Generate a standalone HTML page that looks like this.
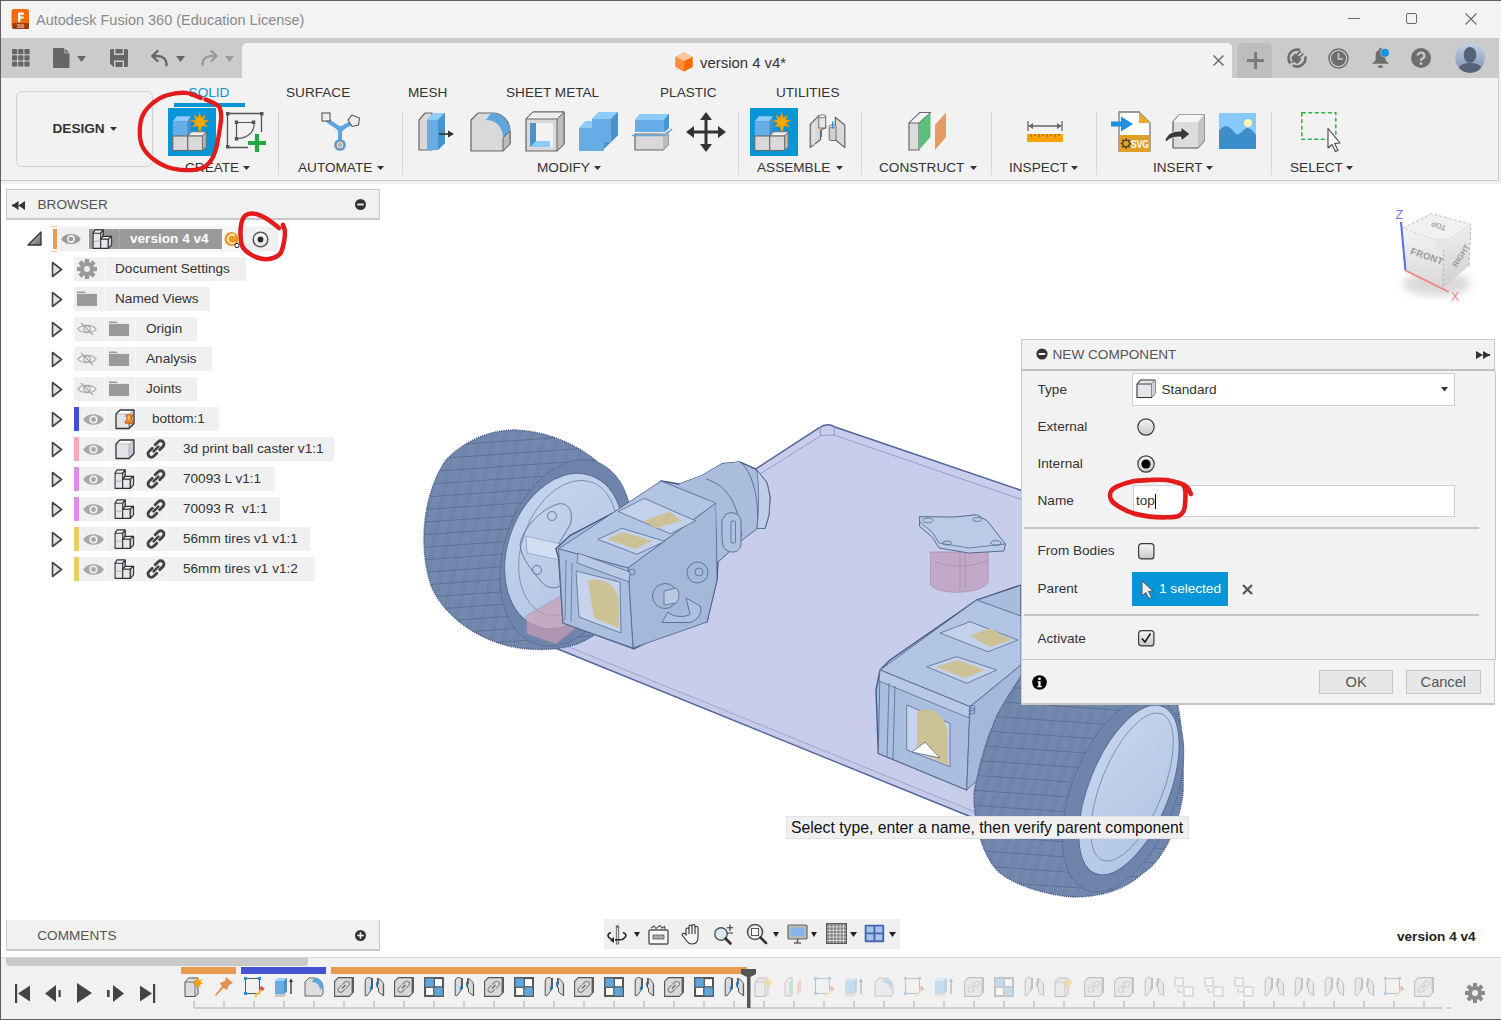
<!DOCTYPE html>
<html><head><meta charset="utf-8">
<style>
html,body{margin:0;padding:0;}
body{width:1501px;height:1020px;overflow:hidden;position:relative;background:#fff;font-family:"Liberation Sans",sans-serif;}
.a{position:absolute;}
.t{white-space:pre;}
svg{overflow:visible;}
</style></head><body>
<div class="a" style="left:0px;top:0px;width:1501px;height:38px;background:#f3f3f3;"></div>
<div class="a" style="left:0px;top:0px;width:1501px;height:1px;background:#5e5e5e;"></div>
<div class="a" style="left:0px;top:0px;width:1px;height:1020px;background:#5e5e5e;"></div>
<div class="a" style="left:0px;top:1019px;width:1501px;height:1px;background:#5e5e5e;"></div>
<svg class="a" style="left:11px;top:9px;" width="19" height="20" viewBox="0 0 19 20">
<rect x="0.5" y="0" width="17.5" height="19.5" rx="2.5" fill="#f26b0f"/>
<rect x="1.5" y="14" width="16.5" height="6" rx="1" fill="#9c3a08"/>
<path d="M7 3.5h6v2.2h-3.6v1.8h3.2v2.1h-3.2v3.4H7z" fill="#fff"/>
<text x="9.5" y="19" font-size="4.5" font-family="Liberation Sans" font-weight="bold" fill="#f4c9a8" text-anchor="middle">360</text>
</svg>
<div class="a t" style="left:36.00px;top:13.33px;font-size:14.5px;line-height:14.5px;color:#8a8a8a;">Autodesk Fusion 360 (Education License)</div>
<div class="a" style="left:1348px;top:18px;width:12px;height:1px;background:#6a6a6a;"></div>
<div class="a" style="left:1406px;top:13px;width:11px;height:11px;border:1px solid #6a6a6a;border-radius:2px;box-sizing:border-box;"></div>
<svg class="a" style="left:1465px;top:13px;" width="12" height="12" viewBox="0 0 12 12"><path d="M0.5 0.5L11.5 11.5M11.5 0.5L0.5 11.5" stroke="#6a6a6a" stroke-width="1.1"/></svg>
<div class="a" style="left:1px;top:38px;width:1498px;height:40px;background:#cbcbcb;"></div>
<div class="a" style="left:1499px;top:38px;width:2px;height:146px;background:#f2f2f2;"></div>
<svg class="a" style="left:12px;top:49px;" width="18" height="18" viewBox="0 0 18 18"><rect x="0.0" y="0.0" width="5.2" height="5.2" rx="0.8" fill="#666"/><rect x="6.2" y="0.0" width="5.2" height="5.2" rx="0.8" fill="#666"/><rect x="12.4" y="0.0" width="5.2" height="5.2" rx="0.8" fill="#666"/><rect x="0.0" y="6.2" width="5.2" height="5.2" rx="0.8" fill="#666"/><rect x="6.2" y="6.2" width="5.2" height="5.2" rx="0.8" fill="#666"/><rect x="12.4" y="6.2" width="5.2" height="5.2" rx="0.8" fill="#666"/><rect x="0.0" y="12.4" width="5.2" height="5.2" rx="0.8" fill="#666"/><rect x="6.2" y="12.4" width="5.2" height="5.2" rx="0.8" fill="#666"/><rect x="12.4" y="12.4" width="5.2" height="5.2" rx="0.8" fill="#666"/></svg>
<svg class="a" style="left:53px;top:48px;" width="17" height="20" viewBox="0 0 17 20"><path d="M1 0H10.5L16.5 6V19a1 1 0 0 1-1 1H1a1 1 0 0 1-1-1V1a1 1 0 0 1 1-1z" fill="#666"/><path d="M11.5 0.3L16.3 5.2H11.5z" fill="#cbcbcb"/><path d="M12.3 0.8L16 4.5H12.3z" fill="#666"/></svg>
<svg class="a" style="left:77px;top:56px;" width="9" height="6" viewBox="0 0 9 6"><path d="M0 0H9L4.5 6Z" fill="#666"/></svg>
<svg class="a" style="left:110px;top:49px;" width="18" height="18" viewBox="0 0 18 18"><path d="M1.5 0H16.5a1.5 1.5 0 0 1 1.5 1.5V16.5a1.5 1.5 0 0 1-1.5 1.5H3.5L0 14.5V1.5A1.5 1.5 0 0 1 1.5 0z" fill="#666"/><path d="M4.7 0V5.3H13.3V0" fill="none" stroke="#cbcbcb" stroke-width="1.4"/><path d="M4.7 18V12.2H13.3V18" fill="none" stroke="#cbcbcb" stroke-width="1.4"/></svg>
<svg class="a" style="left:151px;top:50px;" width="17" height="16" viewBox="0 0 17 16"><path d="M15.5 15C15.5 9 12 6 6.5 6H3" fill="none" stroke="#666" stroke-width="2.4" stroke-linecap="round"/><path d="M6.5 1L1.2 6l5.3 5" fill="none" stroke="#666" stroke-width="2.4" stroke-linecap="round" stroke-linejoin="round"/></svg>
<svg class="a" style="left:176px;top:56px;" width="9" height="6" viewBox="0 0 9 6"><path d="M0 0H9L4.5 6Z" fill="#666"/></svg>
<svg class="a" style="left:201px;top:50px;" width="17" height="16" viewBox="0 0 17 16"><path d="M1.5 15C1.5 9 5 6 10.5 6H14" fill="none" stroke="#9a9a9a" stroke-width="2.4" stroke-linecap="round"/><path d="M10.5 1L15.8 6l-5.3 5" fill="none" stroke="#9a9a9a" stroke-width="2.4" stroke-linecap="round" stroke-linejoin="round"/></svg>
<svg class="a" style="left:225px;top:56px;" width="9" height="6" viewBox="0 0 9 6"><path d="M0 0H9L4.5 6Z" fill="#9a9a9a"/></svg>
<div class="a" style="left:242px;top:43px;width:990px;height:36px;background:#f2f2f2;border-radius:5px 5px 0 0;"></div>
<svg class="a" style="left:675px;top:52px;" width="18" height="20" viewBox="0 0 18 20"><path d="M9 0.5L17.5 5V15L9 19.5L0.5 15V5z" fill="#ff7a1a"/><path d="M9 0.5L17.5 5L9 9.5L0.5 5z" fill="#ffc69a"/><path d="M9 9.5L17.5 5V15L9 19.5z" fill="#ff6a00"/><path d="M0.5 5L9 9.5V19.5L0.5 15z" fill="#ff8d3a"/></svg>
<div class="a t" style="left:700.00px;top:55.69px;font-size:14.9px;line-height:14.9px;color:#333;">version 4 v4*</div>
<svg class="a" style="left:1213px;top:55px;" width="11" height="11" viewBox="0 0 11 11"><path d="M0.5 0.5L10.5 10.5M10.5 0.5L0.5 10.5" stroke="#6d6d6d" stroke-width="1.5"/></svg>
<div class="a" style="left:1237px;top:43px;width:35px;height:36px;background:#bdbdbd;border-radius:5px 5px 0 0;"></div>
<svg class="a" style="left:1247px;top:52px;" width="17" height="17" viewBox="0 0 17 17"><path d="M8.5 0V17M0 8.5H17" stroke="#7a7a7a" stroke-width="3"/></svg>
<svg class="a" style="left:1287px;top:48px;" width="20" height="20" viewBox="0 0 20 20"><path d="M18.37 8.52A8.5 8.5 0 0 1 5.75 17.36M3.49 15.46A8.5 8.5 0 0 1 12.91 2.01" fill="none" stroke="#6d6d6d" stroke-width="2.6"/><g transform="rotate(45 10 10)"><rect x="5.5" y="7.5" width="9" height="7" rx="2" fill="#6d6d6d"/><rect x="6.8" y="2.5" width="1.8" height="5" fill="#6d6d6d"/><rect x="10.4" y="2.5" width="1.8" height="5" fill="#6d6d6d"/><rect x="8.6" y="13" width="1.8" height="4" fill="#6d6d6d"/></g></svg>
<svg class="a" style="left:1328px;top:48px;" width="21" height="21" viewBox="0 0 21 21"><circle cx="10.5" cy="10.5" r="9.5" fill="none" stroke="#6d6d6d" stroke-width="1.5"/><circle cx="10.5" cy="10.5" r="7.5" fill="#6d6d6d"/><path d="M10.5 5V11H15" fill="none" stroke="#cbcbcb" stroke-width="1.6"/></svg>
<svg class="a" style="left:1371px;top:47px;" width="20" height="22" viewBox="0 0 20 22"><rect x="8.3" y="0.8" width="2.4" height="3" rx="1" fill="#6d6d6d"/><path d="M9.5 2.8C5.8 2.8 4.6 6 4.6 9.5V13.3L1 16.8H18L14.4 13.3V9.5C14.4 6 13.2 2.8 9.5 2.8z" fill="#6d6d6d"/><ellipse cx="9.5" cy="19.6" rx="2.6" ry="1.4" fill="#6d6d6d"/><circle cx="14" cy="5.7" r="4.7" fill="#cbcbcb"/><circle cx="14" cy="5.7" r="4" fill="#0f95e0"/></svg>
<svg class="a" style="left:1411px;top:48px;" width="20" height="20" viewBox="0 0 20 20"><circle cx="10" cy="10" r="10" fill="#6d6d6d"/><path d="M6.8 7.6a3.3 3.1 0 1 1 4.6 2.9c-1 .5-1.4 1-1.4 2.2" fill="none" stroke="#cbcbcb" stroke-width="2.3"/><circle cx="10" cy="15.6" r="1.4" fill="#cbcbcb"/></svg>
<svg class="a" style="left:1455px;top:43px;" width="30" height="30" viewBox="0 0 30 30"><defs><linearGradient id="av" x1="0" y1="0" x2="0" y2="1"><stop offset="0" stop-color="#c5d3e6"/><stop offset="1" stop-color="#7b8fab"/></linearGradient><clipPath id="avc"><circle cx="15" cy="15" r="14.8"/></clipPath></defs><circle cx="15" cy="15" r="14.8" fill="url(#av)"/><g clip-path="url(#avc)"><ellipse cx="15" cy="12" rx="6.3" ry="8" fill="#56647a"/><path d="M2 30C3 22 8 20 15 20S27 22 28 30z" fill="#56647a"/></g></svg>
<div class="a" style="left:1px;top:78px;width:1498px;height:102px;background:#f2f2f2;"></div>
<div class="a" style="left:1px;top:180px;width:1498px;height:1.3px;background:#c6c6c6;"></div>
<div class="a" style="left:1497.8px;top:78px;width:1.2px;height:103px;background:#c9c9c9;"></div>
<div class="a" style="left:1px;top:181px;width:1500px;height:3px;background:#f0f0f0;"></div>
<div class="a" style="left:16px;top:91px;width:137px;height:76px;border:1px solid #d2d2d2;border-radius:6px;box-sizing:border-box;"></div>
<div class="a t" style="left:52.50px;top:122.49px;font-size:13.6px;line-height:13.6px;color:#333;font-weight:bold;">DESIGN</div>
<svg class="a" style="left:110px;top:127px;" width="7" height="4" viewBox="0 0 7 4"><path d="M0 0H7L3.5 4Z" fill="#333"/></svg>
<div class="a t" style="left:188.60px;top:86.29px;font-size:13.6px;line-height:13.6px;color:#0696d7;">SOLID</div>
<div class="a" style="left:174px;top:103px;width:71px;height:4px;background:#0696d7;"></div>
<div class="a t" style="left:286.00px;top:86.29px;font-size:13.6px;line-height:13.6px;color:#333;">SURFACE</div>
<div class="a t" style="left:408.00px;top:86.29px;font-size:13.6px;line-height:13.6px;color:#333;">MESH</div>
<div class="a t" style="left:506.00px;top:86.29px;font-size:13.6px;line-height:13.6px;color:#333;">SHEET METAL</div>
<div class="a t" style="left:660.00px;top:86.29px;font-size:13.6px;line-height:13.6px;color:#333;">PLASTIC</div>
<div class="a t" style="left:776.00px;top:86.29px;font-size:13.6px;line-height:13.6px;color:#333;">UTILITIES</div>
<div class="a t" style="left:185.00px;top:161.29px;font-size:13.6px;line-height:13.6px;color:#333;">CREATE</div>
<svg class="a" style="left:243px;top:166px;" width="7" height="4" viewBox="0 0 7 4"><path d="M0 0H7L3.5 4Z" fill="#333"/></svg>
<div class="a t" style="left:298.00px;top:161.29px;font-size:13.6px;line-height:13.6px;color:#333;">AUTOMATE</div>
<svg class="a" style="left:377px;top:166px;" width="7" height="4" viewBox="0 0 7 4"><path d="M0 0H7L3.5 4Z" fill="#333"/></svg>
<div class="a t" style="left:537.00px;top:161.29px;font-size:13.6px;line-height:13.6px;color:#333;">MODIFY</div>
<svg class="a" style="left:594px;top:166px;" width="7" height="4" viewBox="0 0 7 4"><path d="M0 0H7L3.5 4Z" fill="#333"/></svg>
<div class="a t" style="left:757.00px;top:161.29px;font-size:13.6px;line-height:13.6px;color:#333;">ASSEMBLE</div>
<svg class="a" style="left:836px;top:166px;" width="7" height="4" viewBox="0 0 7 4"><path d="M0 0H7L3.5 4Z" fill="#333"/></svg>
<div class="a t" style="left:879.00px;top:161.29px;font-size:13.6px;line-height:13.6px;color:#333;">CONSTRUCT</div>
<svg class="a" style="left:970px;top:166px;" width="7" height="4" viewBox="0 0 7 4"><path d="M0 0H7L3.5 4Z" fill="#333"/></svg>
<div class="a t" style="left:1009.00px;top:161.29px;font-size:13.6px;line-height:13.6px;color:#333;">INSPECT</div>
<svg class="a" style="left:1071px;top:166px;" width="7" height="4" viewBox="0 0 7 4"><path d="M0 0H7L3.5 4Z" fill="#333"/></svg>
<div class="a t" style="left:1153.00px;top:161.29px;font-size:13.6px;line-height:13.6px;color:#333;">INSERT</div>
<svg class="a" style="left:1206px;top:166px;" width="7" height="4" viewBox="0 0 7 4"><path d="M0 0H7L3.5 4Z" fill="#333"/></svg>
<div class="a t" style="left:1290.00px;top:161.29px;font-size:13.6px;line-height:13.6px;color:#333;">SELECT</div>
<svg class="a" style="left:1346px;top:166px;" width="7" height="4" viewBox="0 0 7 4"><path d="M0 0H7L3.5 4Z" fill="#333"/></svg>
<div class="a" style="left:278px;top:111px;width:1px;height:64px;background:#d6d6d6;"></div>
<div class="a" style="left:402px;top:111px;width:1px;height:64px;background:#d6d6d6;"></div>
<div class="a" style="left:738px;top:111px;width:1px;height:64px;background:#d6d6d6;"></div>
<div class="a" style="left:861px;top:111px;width:1px;height:64px;background:#d6d6d6;"></div>
<div class="a" style="left:991px;top:111px;width:1px;height:64px;background:#d6d6d6;"></div>
<div class="a" style="left:1096px;top:111px;width:1px;height:64px;background:#d6d6d6;"></div>
<div class="a" style="left:1271px;top:111px;width:1px;height:64px;background:#d6d6d6;"></div>
<svg class="a" style="left:168px;top:108px;" width="48" height="48" viewBox="0 0 48 48">
<rect width="48" height="48" fill="#0696d7"/>
<path d="M4.8 13.2L8.8 8.3H22.8L19.7 13.2z" fill="#8dcdfa"/>
<path d="M4.8 13.2H19.7V28H4.8z" fill="#67ade6"/>
<path d="M19.7 13.2L22.8 8.3V24L19.7 28z" fill="#4a8fcb"/>
<path d="M19.7 28L23.7 23.8H38.2L34.6 28z" fill="#f3f3f3" stroke="#6a6a6a" stroke-width="0.8"/>
<rect x="4.8" y="28" width="14.9" height="14.5" fill="#d9d9d9" stroke="#6a6a6a" stroke-width="1.1"/>
<rect x="19.7" y="28" width="14.9" height="14.5" fill="#d9d9d9" stroke="#6a6a6a" stroke-width="1.1"/>
<path d="M34.6 28L38.2 23.8V38.5L34.6 42.5z" fill="#b9b9b9" stroke="#6a6a6a" stroke-width="0.8"/>
<path d="M31.7 4.5L33.2 10L37.5 6.8L35.6 11.9L41 12.5L36 15L39.5 19L34.2 17.8L31.7 25L29.8 17.8L24.5 19L27.8 15L22.5 12.8L27.8 11.9L26 6.8L30.2 10z" fill="#f7a800" stroke="#e38c00" stroke-width="0.5"/>
</svg>
<svg class="a" style="left:750px;top:108px;" width="48" height="48" viewBox="0 0 48 48">
<rect width="48" height="48" fill="#0696d7"/>
<path d="M4.8 13.2L8.8 8.3H22.8L19.7 13.2z" fill="#8dcdfa"/>
<path d="M4.8 13.2H19.7V28H4.8z" fill="#67ade6"/>
<path d="M19.7 13.2L22.8 8.3V24L19.7 28z" fill="#4a8fcb"/>
<path d="M19.7 28L23.7 23.8H38.2L34.6 28z" fill="#f3f3f3" stroke="#6a6a6a" stroke-width="0.8"/>
<rect x="4.8" y="28" width="14.9" height="14.5" fill="#d9d9d9" stroke="#6a6a6a" stroke-width="1.1"/>
<rect x="19.7" y="28" width="14.9" height="14.5" fill="#d9d9d9" stroke="#6a6a6a" stroke-width="1.1"/>
<path d="M34.6 28L38.2 23.8V38.5L34.6 42.5z" fill="#b9b9b9" stroke="#6a6a6a" stroke-width="0.8"/>
<path d="M31.7 4.5L33.2 10L37.5 6.8L35.6 11.9L41 12.5L36 15L39.5 19L34.2 17.8L31.7 25L29.8 17.8L24.5 19L27.8 15L22.5 12.8L27.8 11.9L26 6.8L30.2 10z" fill="#f7a800" stroke="#e38c00" stroke-width="0.5"/>
</svg>
<svg class="a" style="left:226px;top:112px;" width="42" height="40" viewBox="0 0 42 40">
<path d="M3 1.5H35M1.5 3V34M35.5 3V20M3 35.5H22" fill="none" stroke="#555" stroke-width="1.3"/>
<rect x="0" y="0" width="3.5" height="3.5" fill="#555"/><rect x="34" y="0" width="3.5" height="3.5" fill="#555"/>
<rect x="0" y="33" width="3.5" height="3.5" fill="#555"/>
<path d="M12.5 10.5H27M10.5 12V27M28.2 12C28 20 22 26 12 26.5" fill="none" stroke="#555" stroke-width="1.2"/>
<rect x="8.8" y="8.5" width="3.5" height="3.5" fill="#555"/><rect x="25.8" y="8.5" width="3.5" height="3.5" fill="#555"/><rect x="8.8" y="25" width="3.5" height="3.5" fill="#555"/>
<path d="M31 22V40M22 31H40" stroke="#24a647" stroke-width="4.2"/>
</svg>
<svg class="a" style="left:321px;top:112px;" width="41" height="40" viewBox="0 0 41 40">
<path d="M5 7C12 14 19 14 19 20V32" fill="none" stroke="#5ea6dd" stroke-width="4"/>
<path d="M34 9C26 14 21 14 19 20" fill="none" stroke="#5ea6dd" stroke-width="4"/>
<path d="M13 14L19 20L25 14z" fill="#5ea6dd"/>
<rect x="1" y="1" width="8" height="8" fill="#eee" stroke="#555" stroke-width="1.1"/>
<path d="M31 3L38.5 6L37.5 13L31 14.5L27 8z" fill="#eee" stroke="#555" stroke-width="1.1"/>
<circle cx="19" cy="33" r="6" fill="#5ea6dd"/><circle cx="19" cy="33" r="4" fill="#d8d8d8" stroke="#777" stroke-width="0.8"/><circle cx="19" cy="33" r="1.4" fill="none" stroke="#777" stroke-width="0.7"/>
</svg>
<svg class="a" style="left:418px;top:112px;" width="38" height="40" viewBox="0 0 38 40">
<path d="M1 38V8L7 1H14V38z" fill="#d9d9d9" stroke="#666" stroke-width="1.2"/>
<path d="M9 38V8L15 1H27V31L20 38z" fill="#65ade4"/>
<path d="M9 8L15 1H27L20 8z" fill="#8dcbf8"/>
<path d="M20 8L27 1V31L20 38z" fill="#4a92cc"/>
<path d="M21 22H31" stroke="#333" stroke-width="1.6"/><path d="M30 18.5L36 22L30 25.5z" fill="#333"/>
</svg>
<svg class="a" style="left:470px;top:112px;" width="42" height="40" viewBox="0 0 42 40">
<path d="M1 39V8L8 1H22C32 1 40 9 40 19V32L33 39z" fill="#d9d9d9" stroke="#666" stroke-width="1.2"/>
<path d="M21 1C31 1 40 9 40 19L33 26C33 16 27 8 16 8z" fill="#5ea6dd"/>
<path d="M33 26V39L40 32V19z" fill="#bbbbbb" stroke="#666" stroke-width="1"/>
</svg>
<svg class="a" style="left:525px;top:111px;" width="41" height="41" viewBox="0 0 41 41">
<path d="M1 40V8L8 1H39V33L32 40z" fill="#d9d9d9" stroke="#666" stroke-width="1.2"/>
<path d="M1 8L8 1H39L32 8z" fill="#eeeeee" stroke="#666" stroke-width="1"/>
<path d="M32 8L39 1V33L32 40z" fill="#bdbdbd" stroke="#666" stroke-width="1"/>
<rect x="5" y="12" width="23" height="24" fill="#f2f2f2"/>
<path d="M5 12H11V30H25V36H5z" fill="#4a92cc"/>
<path d="M11 30H25V36H5z" fill="#8dcbf8"/>
</svg>
<svg class="a" style="left:578px;top:111px;" width="41" height="41" viewBox="0 0 41 41">
<path d="M14 8L21 1H40V24L33 31H26V40H1V17L8 10H14z" fill="#65ade4"/>
<path d="M14 8L21 1H40L33 8z" fill="#8dcbf8"/>
<path d="M1 17L8 10H14V17z" fill="#8dcbf8"/>
<path d="M33 8L40 1V24L33 31z" fill="#4a92cc"/>
<path d="M26 31H33L26 38z" fill="#4a92cc"/>
</svg>
<svg class="a" style="left:632px;top:112px;" width="41" height="40" viewBox="0 0 41 40">
<path d="M3 22H36V33L31 38H3z" fill="#d9d9d9" stroke="#666" stroke-width="1.2"/>
<path d="M31 22L36 18V33L31 38z" fill="#bdbdbd"/>
<path d="M3 8L8 2H37V16L32 20H3z" fill="#65ade4"/>
<path d="M3 8L8 2H37L32 8z" fill="#8dcbf8"/>
<path d="M32 8L37 2V16L32 20z" fill="#4a92cc"/>
<path d="M0 23.5L33 23.5L40 17" fill="none" stroke="#5ea6dd" stroke-width="1.5"/>
</svg>
<svg class="a" style="left:686px;top:112px;" width="40" height="40" viewBox="0 0 40 40">
<path d="M20 3V37M3 20H37" stroke="#333" stroke-width="3"/>
<path d="M20 0L26 8H14z M20 40L26 32H14z M0 20L8 14V26z M40 20L32 14V26z" fill="#333"/>
</svg>
<svg class="a" style="left:809px;top:114px;" width="37" height="35" viewBox="0 0 37 35">
<path d="M1.2 10.3L9.8 1.6H16.2L16.7 13.7L11.5 16.3V25.8L1.2 33.6z" fill="#d9d9d9" stroke="#666" stroke-width="1.2" stroke-linejoin="round"/>
<path d="M5 8V31" stroke="#f0f0f0" stroke-width="1"/>
<rect x="9.8" y="2" width="6.9" height="12" fill="#e8e8e8" stroke="#666" stroke-width="0.9"/>
<ellipse cx="13.25" cy="2.3" rx="3.45" ry="1.5" fill="#f4f4f4" stroke="#666" stroke-width="0.8"/>
<path d="M12.4 16.5V23" stroke="#1d8fe0" stroke-width="1.3"/>
<path d="M26.3 3.3L35.8 11V33.6L26.3 25.8z" fill="#d9d9d9" stroke="#666" stroke-width="1.2" stroke-linejoin="round"/>
<rect x="20.2" y="12" width="6.9" height="14.5" rx="1" fill="#cfcfcf" stroke="#666" stroke-width="0.9"/>
<ellipse cx="23.65" cy="12.4" rx="3.45" ry="1.5" fill="#e4e4e4" stroke="#666" stroke-width="0.8"/>
<path d="M23.7 7.5V14.5" stroke="#1d8fe0" stroke-width="1.3"/>
</svg>
<svg class="a" style="left:908px;top:112px;" width="39" height="39" viewBox="0 0 39 39">
<path d="M1 38V11L12 0.5H22.5L11 11V38z" fill="#dcdcdc" stroke="#666" stroke-width="1.2" stroke-linejoin="round"/>
<path d="M1 11L12 0.5H22.5L11 11z" fill="#f2f2f2" stroke="#666" stroke-width="1"/>
<path d="M11.5 37.5V11L22.5 0.5V25z" fill="#5bc07a"/>
<path d="M27 38V13L38 0.5V25z" fill="#e69a62"/>
</svg>
<svg class="a" style="left:1027px;top:121px;" width="36" height="21" viewBox="0 0 36 21">
<path d="M1 0V10M35 0V10M2 5H34" stroke="#666" stroke-width="1.3"/>
<path d="M1.5 5L6 2V8z M34.5 5L30 2V8z" fill="#666"/>
<rect x="0" y="13" width="36" height="8" fill="#f9a400"/>
<path d="M4 13V16M8 13V15M12 13V16M16 13V15M20 13V16M24 13V15M28 13V16M32 13V15" stroke="#8a5a00" stroke-width="1"/>
</svg>
<svg class="a" style="left:1111px;top:111px;" width="41" height="41" viewBox="0 0 41 41">
<path d="M8 1H28L39 12V40H8z" fill="#fff" stroke="#777" stroke-width="1.3"/>
<path d="M28 1L39 12H28z" fill="#eeaa2a"/>
<path d="M0 10.5H10V5.5L22 13L10 20.5V15.5H0z" fill="#1d8fe0"/>
<rect x="8" y="24" width="31" height="17" fill="#e0a028"/>
<path d="M19.60 32.50 L17.77 33.65 L18.25 35.75 L16.15 35.27 L15.00 37.10 L13.85 35.27 L11.75 35.75 L12.23 33.65 L10.40 32.50 L12.23 31.35 L11.75 29.25 L13.85 29.73 L15.00 27.90 L16.15 29.73 L18.25 29.25 L17.77 31.35z" fill="none" stroke="#333" stroke-width="1.1"/>
<text x="20" y="37.3" font-family="Liberation Sans" font-weight="bold" font-size="10" fill="#fff" textLength="18" lengthAdjust="spacingAndGlyphs">SVG</text>
</svg>
<svg class="a" style="left:1165px;top:114px;" width="40" height="35" viewBox="0 0 40 35">
<path d="M8 8L14 1H39V27L33 34H8z" fill="#dcdcdc" stroke="#555" stroke-width="1.2"/>
<path d="M8 8L14 1H39L33 8z" fill="#f5f5f5"/>
<path d="M33 8L39 1V27L33 34z" fill="#c4c4c4"/>
<path d="M0 26C3 19 8 17 16 17V13L25 20L16 27V23C9 23 5 24 1 28z" fill="#3a3a3a" stroke="#fff" stroke-width="0.8"/>
</svg>
<svg class="a" style="left:1219px;top:113px;" width="37" height="36" viewBox="0 0 37 36">
<rect width="37" height="36" fill="#87c9f9"/>
<path d="M0 18C6 10 10 13 16 20C19 24 22 19 26 16C30 13 34 18 37 22V36H0z" fill="#3b8dcc"/>
<circle cx="29" cy="10" r="4" fill="#f7f3b0"/>
</svg>
<svg class="a" style="left:1301px;top:112px;" width="42" height="40" viewBox="0 0 42 40">
<rect x="0.8" y="0.8" width="34" height="26.5" fill="none" stroke="#2fb04a" stroke-width="1.5" stroke-dasharray="4 2.5"/>
<path d="M27 16.5V36L31 32.5L34.5 39.5L37 38.3L33.6 31.5L39 31z" fill="#fff" stroke="#444" stroke-width="1.1" stroke-linejoin="round"/>
</svg>
<div class="a" style="left:6px;top:189px;width:374px;height:31px;background:#f1f1f1;border:1px solid #c9c9c9;border-bottom-width:2px;box-sizing:border-box;"></div>
<svg class="a" style="left:12px;top:201px;" width="14" height="9" viewBox="0 0 14 9"><path d="M0 4.5L6.5 0V9z M6.5 4.5L13 0V9z" fill="#333"/><rect x="0" y="3.5" width="2" height="2" fill="#333"/></svg>
<div class="a t" style="left:37.50px;top:198.49px;font-size:13.6px;line-height:13.6px;color:#555;">BROWSER</div>
<svg class="a" style="left:355px;top:199px;" width="11" height="11" viewBox="0 0 11 11"><circle cx="5.5" cy="5.5" r="5.5" fill="#333"/><rect x="2.3" y="4.6" width="6.4" height="1.8" fill="#f1f1f1"/></svg>
<div class="a" style="left:51px;top:226px;width:228px;height:26px;background:#f7f7f7;"></div>
<div class="a" style="left:51px;top:226px;width:6px;height:1px;background:#f5c9a0;"></div>
<div class="a" style="left:51px;top:251px;width:6px;height:1px;background:#f5c9a0;"></div>
<svg class="a" style="left:27px;top:231px;" width="15" height="15" viewBox="0 0 15 15"><defs><linearGradient id="tg" x1="0" y1="0" x2="1" y2="1"><stop offset="0" stop-color="#ddd"/><stop offset="1" stop-color="#666"/></linearGradient></defs><path d="M1 14L14 1V14z" fill="url(#tg)" stroke="#333" stroke-width="1.3" stroke-linejoin="round"/></svg>
<div class="a" style="left:53px;top:229px;width:4px;height:20px;background:#ec9a45;"></div>
<div class="a" style="left:58px;top:228px;width:30px;height:23px;background:#f0f0f0;"></div>
<svg class="a" style="left:61px;top:233px;" width="20" height="12" viewBox="0 0 20 12"><path d="M0.3 6C3.5 -0.8 16.5 -0.8 19.7 6C16.5 12.8 3.5 12.8 0.3 6z" fill="#9a9a9a"/><circle cx="10" cy="6" r="3.9" fill="#f0f0f0"/><circle cx="10" cy="6" r="2.3" fill="#9a9a9a"/></svg>
<div class="a" style="left:88.5px;top:229px;width:133px;height:20px;background:#9a9a9a;"></div>
<div class="a" style="left:119px;top:229px;width:1px;height:20px;background:#a8a8a8;"></div>
<svg class="a" style="left:92px;top:229px;" width="20" height="20" viewBox="0 0 20 20"><g stroke="#333" stroke-width="1.1" stroke-linejoin="round"><path d="M1.1 4.2L3.1 1H11.1V7.4L8.7 10.2V19.4H1.1z" fill="#e6e7ec"/><path d="M1.1 4.2L3.1 1H11.1L8.7 4.2z" fill="#f4f4f7"/><path d="M8.7 4.2L11.1 1V7.4L8.7 10.2z" fill="#d2d3d9"/><path d="M8.7 10.2L11.1 7.4H19.6L16.3 10.2z" fill="#f4f4f7"/><path d="M8.7 10.2H16.3V19.4H8.7z" fill="#e6e7ec"/><path d="M16.3 10.2L19.6 7.4V15.8L16.3 19.4z" fill="#d2d3d9"/></g><path d="M1.1 12.2H8.7" stroke="#999" stroke-width="0.7"/></svg>
<div class="a t" style="left:130.00px;top:232.49px;font-size:13.6px;line-height:13.6px;color:#fff;font-weight:bold;">version 4 v4</div>
<svg class="a" style="left:224px;top:230px;" width="16" height="19" viewBox="0 0 16 19"><circle cx="7.5" cy="9" r="7" fill="#ec9a22"/><path d="M10.8 5.6A4.3 4.3 0 1 0 10.8 12.4" fill="none" stroke="#fff" stroke-width="1.3"/><circle cx="13" cy="15.5" r="2.2" fill="#fff" stroke="#222" stroke-width="1"/></svg>
<div class="a" style="left:243px;top:227px;width:35px;height:24px;background:#f0f0f0;"></div>
<svg class="a" style="left:252px;top:231px;" width="17" height="17" viewBox="0 0 17 17"><defs><linearGradient id="rdg" x1="0" y1="0" x2="0" y2="1"><stop offset="0" stop-color="#fcfcfc"/><stop offset="1" stop-color="#e2e2e2"/></linearGradient></defs><circle cx="8.5" cy="8.5" r="7.3" fill="url(#rdg)" stroke="#555" stroke-width="1.5"/><circle cx="8.5" cy="8.5" r="2.9" fill="#2a2a2a"/></svg>
<svg class="a" style="left:51px;top:260.5px;" width="12" height="17" viewBox="0 0 12 17"><path d="M1.5 1.5L10.5 8.5L1.5 15.5z" fill="#e2e2e2" stroke="#444" stroke-width="1.6" stroke-linejoin="round"/></svg>
<div class="a" style="left:73.5px;top:257px;width:172.1px;height:24px;background:#f0f0f0;"></div>
<svg class="a" style="left:77px;top:259px;" width="20" height="20" viewBox="0 0 20 20"><g transform="translate(10 10)"><rect x="-2.2" y="-10" width="4.4" height="5" fill="#9a9a9a" transform="rotate(0)"/><rect x="-2.2" y="-10" width="4.4" height="5" fill="#9a9a9a" transform="rotate(45)"/><rect x="-2.2" y="-10" width="4.4" height="5" fill="#9a9a9a" transform="rotate(90)"/><rect x="-2.2" y="-10" width="4.4" height="5" fill="#9a9a9a" transform="rotate(135)"/><rect x="-2.2" y="-10" width="4.4" height="5" fill="#9a9a9a" transform="rotate(180)"/><rect x="-2.2" y="-10" width="4.4" height="5" fill="#9a9a9a" transform="rotate(225)"/><rect x="-2.2" y="-10" width="4.4" height="5" fill="#9a9a9a" transform="rotate(270)"/><rect x="-2.2" y="-10" width="4.4" height="5" fill="#9a9a9a" transform="rotate(315)"/><circle r="7" fill="#9a9a9a"/><circle r="3" fill="#f0f0f0"/></g></svg>
<div class="a" style="left:104px;top:257px;width:1px;height:24px;background:#f7f7f7;"></div>
<div class="a t" style="left:115.00px;top:261.99px;font-size:13.6px;line-height:13.6px;color:#333;">Document Settings</div>
<svg class="a" style="left:51px;top:290.5px;" width="12" height="17" viewBox="0 0 12 17"><path d="M1.5 1.5L10.5 8.5L1.5 15.5z" fill="#e2e2e2" stroke="#444" stroke-width="1.6" stroke-linejoin="round"/></svg>
<div class="a" style="left:73.5px;top:287px;width:136.9px;height:24px;background:#f0f0f0;"></div>
<svg class="a" style="left:77px;top:290px;" width="20" height="17" viewBox="0 0 20 17"><path d="M0 1.5h7.5l1.5 2H20V16H0z" fill="#9a9a9a"/><rect x="0" y="4.5" width="20" height="11.5" fill="#9a9a9a"/><path d="M0 3.5h20" stroke="#f0f0f0" stroke-width="0.8"/></svg>
<div class="a" style="left:104px;top:287px;width:1px;height:24px;background:#f7f7f7;"></div>
<div class="a t" style="left:115.00px;top:291.99px;font-size:13.6px;line-height:13.6px;color:#333;">Named Views</div>
<svg class="a" style="left:51px;top:320.5px;" width="12" height="17" viewBox="0 0 12 17"><path d="M1.5 1.5L10.5 8.5L1.5 15.5z" fill="#e2e2e2" stroke="#444" stroke-width="1.6" stroke-linejoin="round"/></svg>
<div class="a" style="left:73.5px;top:317px;width:123.5px;height:24px;background:#f0f0f0;"></div>
<svg class="a" style="left:77px;top:323px;" width="20" height="12" viewBox="0 0 20 12"><path d="M0.8 6C4.5 1.2 15.5 1.2 19.2 6C15.5 10.8 4.5 10.8 0.8 6z" fill="none" stroke="#a8a8a8" stroke-width="1.2"/><circle cx="10" cy="6" r="3.2" fill="none" stroke="#a8a8a8" stroke-width="1.2"/><path d="M4 0L16 12" stroke="#a8a8a8" stroke-width="1.2"/></svg>
<div class="a" style="left:104px;top:317px;width:1px;height:24px;background:#f7f7f7;"></div>
<svg class="a" style="left:108.5px;top:320px;" width="20" height="17" viewBox="0 0 20 17"><path d="M0 1.5h7.5l1.5 2H20V16H0z" fill="#9a9a9a"/><rect x="0" y="4.5" width="20" height="11.5" fill="#9a9a9a"/><path d="M0 3.5h20" stroke="#f0f0f0" stroke-width="0.8"/></svg>
<div class="a" style="left:135px;top:317px;width:1px;height:24px;background:#f7f7f7;"></div>
<div class="a t" style="left:146.00px;top:321.99px;font-size:13.6px;line-height:13.6px;color:#333;">Origin</div>
<svg class="a" style="left:51px;top:350.5px;" width="12" height="17" viewBox="0 0 12 17"><path d="M1.5 1.5L10.5 8.5L1.5 15.5z" fill="#e2e2e2" stroke="#444" stroke-width="1.6" stroke-linejoin="round"/></svg>
<div class="a" style="left:73.5px;top:347px;width:138.5px;height:24px;background:#f0f0f0;"></div>
<svg class="a" style="left:77px;top:353px;" width="20" height="12" viewBox="0 0 20 12"><path d="M0.8 6C4.5 1.2 15.5 1.2 19.2 6C15.5 10.8 4.5 10.8 0.8 6z" fill="none" stroke="#a8a8a8" stroke-width="1.2"/><circle cx="10" cy="6" r="3.2" fill="none" stroke="#a8a8a8" stroke-width="1.2"/><path d="M4 0L16 12" stroke="#a8a8a8" stroke-width="1.2"/></svg>
<div class="a" style="left:104px;top:347px;width:1px;height:24px;background:#f7f7f7;"></div>
<svg class="a" style="left:108.5px;top:350px;" width="20" height="17" viewBox="0 0 20 17"><path d="M0 1.5h7.5l1.5 2H20V16H0z" fill="#9a9a9a"/><rect x="0" y="4.5" width="20" height="11.5" fill="#9a9a9a"/><path d="M0 3.5h20" stroke="#f0f0f0" stroke-width="0.8"/></svg>
<div class="a" style="left:135px;top:347px;width:1px;height:24px;background:#f7f7f7;"></div>
<div class="a t" style="left:146.00px;top:351.99px;font-size:13.6px;line-height:13.6px;color:#333;">Analysis</div>
<svg class="a" style="left:51px;top:380.5px;" width="12" height="17" viewBox="0 0 12 17"><path d="M1.5 1.5L10.5 8.5L1.5 15.5z" fill="#e2e2e2" stroke="#444" stroke-width="1.6" stroke-linejoin="round"/></svg>
<div class="a" style="left:73.5px;top:377px;width:123.5px;height:24px;background:#f0f0f0;"></div>
<svg class="a" style="left:77px;top:383px;" width="20" height="12" viewBox="0 0 20 12"><path d="M0.8 6C4.5 1.2 15.5 1.2 19.2 6C15.5 10.8 4.5 10.8 0.8 6z" fill="none" stroke="#a8a8a8" stroke-width="1.2"/><circle cx="10" cy="6" r="3.2" fill="none" stroke="#a8a8a8" stroke-width="1.2"/><path d="M4 0L16 12" stroke="#a8a8a8" stroke-width="1.2"/></svg>
<div class="a" style="left:104px;top:377px;width:1px;height:24px;background:#f7f7f7;"></div>
<svg class="a" style="left:108.5px;top:380px;" width="20" height="17" viewBox="0 0 20 17"><path d="M0 1.5h7.5l1.5 2H20V16H0z" fill="#9a9a9a"/><rect x="0" y="4.5" width="20" height="11.5" fill="#9a9a9a"/><path d="M0 3.5h20" stroke="#f0f0f0" stroke-width="0.8"/></svg>
<div class="a" style="left:135px;top:377px;width:1px;height:24px;background:#f7f7f7;"></div>
<div class="a t" style="left:146.00px;top:381.99px;font-size:13.6px;line-height:13.6px;color:#333;">Joints</div>
<svg class="a" style="left:51px;top:410.5px;" width="12" height="17" viewBox="0 0 12 17"><path d="M1.5 1.5L10.5 8.5L1.5 15.5z" fill="#e2e2e2" stroke="#444" stroke-width="1.6" stroke-linejoin="round"/></svg>
<div class="a" style="left:73.5px;top:407px;width:145.5px;height:24px;background:#f0f0f0;"></div>
<div class="a" style="left:73.5px;top:407px;width:5.5px;height:24px;background:#3d4fd6;"></div>
<svg class="a" style="left:83px;top:412.5px;" width="21" height="13" viewBox="0 0 20 12"><path d="M0.3 6C3.5 -0.8 16.5 -0.8 19.7 6C16.5 12.8 3.5 12.8 0.3 6z" fill="#a8a8a8"/><circle cx="10" cy="6" r="3.9" fill="#f0f0f0"/><circle cx="10" cy="6" r="2.3" fill="#a8a8a8"/></svg>
<div class="a" style="left:104px;top:407px;width:1px;height:24px;background:#f7f7f7;"></div>
<svg class="a" style="left:114px;top:409px;" width="20" height="20" viewBox="0 0 20 20"><path d="M2 5L6 1H20V14.5L15 19.5H2z" fill="#e3e4e9"/><path d="M2 5L6 1H20L15 5z" fill="#fafafc"/><path d="M15 5L20 1V14.5L15 19.5z" fill="#c8cad2"/><path d="M2 5H15V19.5M15 5L20 1" fill="none" stroke="#9a9ca4" stroke-width="0.6"/><path d="M2 5L6 1H20V14.5L15 19.5H2z" fill="none" stroke="#333" stroke-width="1.3" stroke-linejoin="round"/><path d="M12 5.8H18.5V7.8H17.3L17.8 11.2L19.5 12.6V14.2H11V12.6L12.7 11.2L13.2 7.8H12z" fill="#f28a22" stroke="#b8460e" stroke-width="0.8" stroke-linejoin="round"/><path d="M15.2 14.2V18.5" stroke="#666" stroke-width="1.1"/><rect x="13.6" y="6.5" width="2" height="4.5" fill="#ffd08a" opacity="0.7"/></svg>
<div class="a" style="left:135px;top:407px;width:1px;height:24px;background:#f7f7f7;"></div>
<div class="a t" style="left:152.00px;top:411.99px;font-size:13.6px;line-height:13.6px;color:#333;">bottom:1</div>
<svg class="a" style="left:51px;top:440.5px;" width="12" height="17" viewBox="0 0 12 17"><path d="M1.5 1.5L10.5 8.5L1.5 15.5z" fill="#e2e2e2" stroke="#444" stroke-width="1.6" stroke-linejoin="round"/></svg>
<div class="a" style="left:73.5px;top:437px;width:260.5px;height:24px;background:#f0f0f0;"></div>
<div class="a" style="left:73.5px;top:437px;width:5.5px;height:24px;background:#f7aab4;"></div>
<svg class="a" style="left:83px;top:442.5px;" width="21" height="13" viewBox="0 0 20 12"><path d="M0.3 6C3.5 -0.8 16.5 -0.8 19.7 6C16.5 12.8 3.5 12.8 0.3 6z" fill="#a8a8a8"/><circle cx="10" cy="6" r="3.9" fill="#f0f0f0"/><circle cx="10" cy="6" r="2.3" fill="#a8a8a8"/></svg>
<div class="a" style="left:104px;top:437px;width:1px;height:24px;background:#f7f7f7;"></div>
<svg class="a" style="left:114px;top:439px;" width="20" height="20" viewBox="0 0 20 20"><path d="M2 5L6 1H20V14.5L15 19.5H2z" fill="#e3e4e9"/><path d="M2 5L6 1H20L15 5z" fill="#fafafc"/><path d="M15 5L20 1V14.5L15 19.5z" fill="#c8cad2"/><path d="M2 5H15V19.5M15 5L20 1" fill="none" stroke="#9a9ca4" stroke-width="0.6"/><path d="M2 5L6 1H20V14.5L15 19.5H2z" fill="none" stroke="#333" stroke-width="1.3" stroke-linejoin="round"/></svg>
<div class="a" style="left:135px;top:437px;width:1px;height:24px;background:#f7f7f7;"></div>
<svg class="a" style="left:146px;top:439px;" width="20" height="20" viewBox="0 0 20 20"><path d="M9.2 5.8L12.3 2.7a3.3 3.3 0 0 1 4.7 4.7L13.7 10.7" fill="none" stroke="#444" stroke-width="2.9" stroke-linecap="round"/><path d="M10.8 14.2L7.7 17.3a3.3 3.3 0 0 1-4.7-4.7L6.3 9.3" fill="none" stroke="#444" stroke-width="2.9" stroke-linecap="round"/><path d="M7.6 12.4L12.4 7.6" stroke="#444" stroke-width="2.6" stroke-linecap="round"/></svg>
<div class="a" style="left:166px;top:437px;width:1px;height:24px;background:#f7f7f7;"></div>
<div class="a t" style="left:183.00px;top:441.99px;font-size:13.6px;line-height:13.6px;color:#333;">3d print ball caster v1:1</div>
<svg class="a" style="left:51px;top:470.5px;" width="12" height="17" viewBox="0 0 12 17"><path d="M1.5 1.5L10.5 8.5L1.5 15.5z" fill="#e2e2e2" stroke="#444" stroke-width="1.6" stroke-linejoin="round"/></svg>
<div class="a" style="left:73.5px;top:467px;width:201.5px;height:24px;background:#f0f0f0;"></div>
<div class="a" style="left:73.5px;top:467px;width:5.5px;height:24px;background:#e08ce6;"></div>
<svg class="a" style="left:83px;top:472.5px;" width="21" height="13" viewBox="0 0 20 12"><path d="M0.3 6C3.5 -0.8 16.5 -0.8 19.7 6C16.5 12.8 3.5 12.8 0.3 6z" fill="#a8a8a8"/><circle cx="10" cy="6" r="3.9" fill="#f0f0f0"/><circle cx="10" cy="6" r="2.3" fill="#a8a8a8"/></svg>
<div class="a" style="left:104px;top:467px;width:1px;height:24px;background:#f7f7f7;"></div>
<svg class="a" style="left:114px;top:469px;" width="20" height="20" viewBox="0 0 20 20"><g stroke="#333" stroke-width="1.1" stroke-linejoin="round"><path d="M1.1 4.2L3.1 1H11.1V7.4L8.7 10.2V19.4H1.1z" fill="#e6e7ec"/><path d="M1.1 4.2L3.1 1H11.1L8.7 4.2z" fill="#f4f4f7"/><path d="M8.7 4.2L11.1 1V7.4L8.7 10.2z" fill="#d2d3d9"/><path d="M8.7 10.2L11.1 7.4H19.6L16.3 10.2z" fill="#f4f4f7"/><path d="M8.7 10.2H16.3V19.4H8.7z" fill="#e6e7ec"/><path d="M16.3 10.2L19.6 7.4V15.8L16.3 19.4z" fill="#d2d3d9"/></g><path d="M1.1 12.2H8.7" stroke="#999" stroke-width="0.7"/></svg>
<div class="a" style="left:135px;top:467px;width:1px;height:24px;background:#f7f7f7;"></div>
<svg class="a" style="left:146px;top:469px;" width="20" height="20" viewBox="0 0 20 20"><path d="M9.2 5.8L12.3 2.7a3.3 3.3 0 0 1 4.7 4.7L13.7 10.7" fill="none" stroke="#444" stroke-width="2.9" stroke-linecap="round"/><path d="M10.8 14.2L7.7 17.3a3.3 3.3 0 0 1-4.7-4.7L6.3 9.3" fill="none" stroke="#444" stroke-width="2.9" stroke-linecap="round"/><path d="M7.6 12.4L12.4 7.6" stroke="#444" stroke-width="2.6" stroke-linecap="round"/></svg>
<div class="a" style="left:166px;top:467px;width:1px;height:24px;background:#f7f7f7;"></div>
<div class="a t" style="left:183.00px;top:471.99px;font-size:13.6px;line-height:13.6px;color:#333;">70093 L v1:1</div>
<svg class="a" style="left:51px;top:500.5px;" width="12" height="17" viewBox="0 0 12 17"><path d="M1.5 1.5L10.5 8.5L1.5 15.5z" fill="#e2e2e2" stroke="#444" stroke-width="1.6" stroke-linejoin="round"/></svg>
<div class="a" style="left:73.5px;top:497px;width:206.5px;height:24px;background:#f0f0f0;"></div>
<div class="a" style="left:73.5px;top:497px;width:5.5px;height:24px;background:#e08ce6;"></div>
<svg class="a" style="left:83px;top:502.5px;" width="21" height="13" viewBox="0 0 20 12"><path d="M0.3 6C3.5 -0.8 16.5 -0.8 19.7 6C16.5 12.8 3.5 12.8 0.3 6z" fill="#a8a8a8"/><circle cx="10" cy="6" r="3.9" fill="#f0f0f0"/><circle cx="10" cy="6" r="2.3" fill="#a8a8a8"/></svg>
<div class="a" style="left:104px;top:497px;width:1px;height:24px;background:#f7f7f7;"></div>
<svg class="a" style="left:114px;top:499px;" width="20" height="20" viewBox="0 0 20 20"><g stroke="#333" stroke-width="1.1" stroke-linejoin="round"><path d="M1.1 4.2L3.1 1H11.1V7.4L8.7 10.2V19.4H1.1z" fill="#e6e7ec"/><path d="M1.1 4.2L3.1 1H11.1L8.7 4.2z" fill="#f4f4f7"/><path d="M8.7 4.2L11.1 1V7.4L8.7 10.2z" fill="#d2d3d9"/><path d="M8.7 10.2L11.1 7.4H19.6L16.3 10.2z" fill="#f4f4f7"/><path d="M8.7 10.2H16.3V19.4H8.7z" fill="#e6e7ec"/><path d="M16.3 10.2L19.6 7.4V15.8L16.3 19.4z" fill="#d2d3d9"/></g><path d="M1.1 12.2H8.7" stroke="#999" stroke-width="0.7"/></svg>
<div class="a" style="left:135px;top:497px;width:1px;height:24px;background:#f7f7f7;"></div>
<svg class="a" style="left:146px;top:499px;" width="20" height="20" viewBox="0 0 20 20"><path d="M9.2 5.8L12.3 2.7a3.3 3.3 0 0 1 4.7 4.7L13.7 10.7" fill="none" stroke="#444" stroke-width="2.9" stroke-linecap="round"/><path d="M10.8 14.2L7.7 17.3a3.3 3.3 0 0 1-4.7-4.7L6.3 9.3" fill="none" stroke="#444" stroke-width="2.9" stroke-linecap="round"/><path d="M7.6 12.4L12.4 7.6" stroke="#444" stroke-width="2.6" stroke-linecap="round"/></svg>
<div class="a" style="left:166px;top:497px;width:1px;height:24px;background:#f7f7f7;"></div>
<div class="a t" style="left:183.00px;top:501.99px;font-size:13.6px;line-height:13.6px;color:#333;">70093 R  v1:1</div>
<svg class="a" style="left:51px;top:530.5px;" width="12" height="17" viewBox="0 0 12 17"><path d="M1.5 1.5L10.5 8.5L1.5 15.5z" fill="#e2e2e2" stroke="#444" stroke-width="1.6" stroke-linejoin="round"/></svg>
<div class="a" style="left:73.5px;top:527px;width:236.5px;height:24px;background:#f0f0f0;"></div>
<div class="a" style="left:73.5px;top:527px;width:5.5px;height:24px;background:#e8cf63;"></div>
<svg class="a" style="left:83px;top:532.5px;" width="21" height="13" viewBox="0 0 20 12"><path d="M0.3 6C3.5 -0.8 16.5 -0.8 19.7 6C16.5 12.8 3.5 12.8 0.3 6z" fill="#a8a8a8"/><circle cx="10" cy="6" r="3.9" fill="#f0f0f0"/><circle cx="10" cy="6" r="2.3" fill="#a8a8a8"/></svg>
<div class="a" style="left:104px;top:527px;width:1px;height:24px;background:#f7f7f7;"></div>
<svg class="a" style="left:114px;top:529px;" width="20" height="20" viewBox="0 0 20 20"><g stroke="#333" stroke-width="1.1" stroke-linejoin="round"><path d="M1.1 4.2L3.1 1H11.1V7.4L8.7 10.2V19.4H1.1z" fill="#e6e7ec"/><path d="M1.1 4.2L3.1 1H11.1L8.7 4.2z" fill="#f4f4f7"/><path d="M8.7 4.2L11.1 1V7.4L8.7 10.2z" fill="#d2d3d9"/><path d="M8.7 10.2L11.1 7.4H19.6L16.3 10.2z" fill="#f4f4f7"/><path d="M8.7 10.2H16.3V19.4H8.7z" fill="#e6e7ec"/><path d="M16.3 10.2L19.6 7.4V15.8L16.3 19.4z" fill="#d2d3d9"/></g><path d="M1.1 12.2H8.7" stroke="#999" stroke-width="0.7"/></svg>
<div class="a" style="left:135px;top:527px;width:1px;height:24px;background:#f7f7f7;"></div>
<svg class="a" style="left:146px;top:529px;" width="20" height="20" viewBox="0 0 20 20"><path d="M9.2 5.8L12.3 2.7a3.3 3.3 0 0 1 4.7 4.7L13.7 10.7" fill="none" stroke="#444" stroke-width="2.9" stroke-linecap="round"/><path d="M10.8 14.2L7.7 17.3a3.3 3.3 0 0 1-4.7-4.7L6.3 9.3" fill="none" stroke="#444" stroke-width="2.9" stroke-linecap="round"/><path d="M7.6 12.4L12.4 7.6" stroke="#444" stroke-width="2.6" stroke-linecap="round"/></svg>
<div class="a" style="left:166px;top:527px;width:1px;height:24px;background:#f7f7f7;"></div>
<div class="a t" style="left:183.00px;top:531.99px;font-size:13.6px;line-height:13.6px;color:#333;">56mm tires v1 v1:1</div>
<svg class="a" style="left:51px;top:560.5px;" width="12" height="17" viewBox="0 0 12 17"><path d="M1.5 1.5L10.5 8.5L1.5 15.5z" fill="#e2e2e2" stroke="#444" stroke-width="1.6" stroke-linejoin="round"/></svg>
<div class="a" style="left:73.5px;top:557px;width:241.5px;height:24px;background:#f0f0f0;"></div>
<div class="a" style="left:73.5px;top:557px;width:5.5px;height:24px;background:#e8cf63;"></div>
<svg class="a" style="left:83px;top:562.5px;" width="21" height="13" viewBox="0 0 20 12"><path d="M0.3 6C3.5 -0.8 16.5 -0.8 19.7 6C16.5 12.8 3.5 12.8 0.3 6z" fill="#a8a8a8"/><circle cx="10" cy="6" r="3.9" fill="#f0f0f0"/><circle cx="10" cy="6" r="2.3" fill="#a8a8a8"/></svg>
<div class="a" style="left:104px;top:557px;width:1px;height:24px;background:#f7f7f7;"></div>
<svg class="a" style="left:114px;top:559px;" width="20" height="20" viewBox="0 0 20 20"><g stroke="#333" stroke-width="1.1" stroke-linejoin="round"><path d="M1.1 4.2L3.1 1H11.1V7.4L8.7 10.2V19.4H1.1z" fill="#e6e7ec"/><path d="M1.1 4.2L3.1 1H11.1L8.7 4.2z" fill="#f4f4f7"/><path d="M8.7 4.2L11.1 1V7.4L8.7 10.2z" fill="#d2d3d9"/><path d="M8.7 10.2L11.1 7.4H19.6L16.3 10.2z" fill="#f4f4f7"/><path d="M8.7 10.2H16.3V19.4H8.7z" fill="#e6e7ec"/><path d="M16.3 10.2L19.6 7.4V15.8L16.3 19.4z" fill="#d2d3d9"/></g><path d="M1.1 12.2H8.7" stroke="#999" stroke-width="0.7"/></svg>
<div class="a" style="left:135px;top:557px;width:1px;height:24px;background:#f7f7f7;"></div>
<svg class="a" style="left:146px;top:559px;" width="20" height="20" viewBox="0 0 20 20"><path d="M9.2 5.8L12.3 2.7a3.3 3.3 0 0 1 4.7 4.7L13.7 10.7" fill="none" stroke="#444" stroke-width="2.9" stroke-linecap="round"/><path d="M10.8 14.2L7.7 17.3a3.3 3.3 0 0 1-4.7-4.7L6.3 9.3" fill="none" stroke="#444" stroke-width="2.9" stroke-linecap="round"/><path d="M7.6 12.4L12.4 7.6" stroke="#444" stroke-width="2.6" stroke-linecap="round"/></svg>
<div class="a" style="left:166px;top:557px;width:1px;height:24px;background:#f7f7f7;"></div>
<div class="a t" style="left:183.00px;top:561.99px;font-size:13.6px;line-height:13.6px;color:#333;">56mm tires v1 v1:2</div>
<svg class="a" style="left:0px;top:0px;" width="1501" height="1020" viewBox="0 0 1501 1020">
<defs>
<pattern id="tread" width="13" height="12.5" patternUnits="userSpaceOnUse" patternTransform="rotate(-4) skewX(-15)">
<rect width="13" height="12.5" fill="#7388ad"/>
<path d="M0 0.6H13" stroke="#586c92" stroke-width="1.1"/>
<path d="M0 1.8H13" stroke="#8093b6" stroke-width="0.6"/>
<path d="M0.5 0V12.5M3.5 0V12.5" stroke="#64789d" stroke-width="0.6"/>
</pattern>
<pattern id="tread2" width="12" height="15" patternUnits="userSpaceOnUse" patternTransform="rotate(4) skewX(-12)">
<rect width="12" height="15" fill="#7388ad"/>
<path d="M0 0.6H12" stroke="#586c92" stroke-width="1.1"/>
<path d="M0 1.8H12" stroke="#8093b6" stroke-width="0.6"/>
<path d="M0.5 0V15M3.5 0V15" stroke="#64789d" stroke-width="0.6"/>
</pattern>
<linearGradient id="hubg" x1="0" y1="0" x2="1" y2="1"><stop offset="0" stop-color="#c6d6ee"/><stop offset="1" stop-color="#b0c4e3"/></linearGradient>
</defs>
<!-- plate -->
<path d="M515 625L819 428Q827 422 835 427L1346 601L985 816z" fill="#c8cdec"/>
<path d="M515 625L985 816L986 823L516 632z" fill="#c5cae9"/>
<path d="M515 625L819 428Q827 422 835 427L1346 601" fill="none" stroke="#4f6499" stroke-width="1.5"/>
<path d="M560 600L821 435.6L834 435L1340 609" fill="none" stroke="#8592c4" stroke-width="0.8"/>
<path d="M820.5 426V435.6M834.3 426V435" fill="none" stroke="#8592c4" stroke-width="0.8"/>
<path d="M515 625L985 816" fill="none" stroke="#8d99cb" stroke-width="0.8"/>
<path d="M516 632L986 823" fill="none" stroke="#4f6499" stroke-width="1.4"/>
<path d="M515 430C550 431 600 450 621 492C632 520 628 600 600 630C582 647 555 651 528 649C488 646 448 622 432 588C418 550 422 495 446 460C465 440 490 430 515 430z" fill="url(#tread)" stroke="#42578a" stroke-width="1.4" stroke-dasharray="1.2 1"/><ellipse cx="566" cy="553" rx="62" ry="96" transform="rotate(18 566 553)" fill="#6f84aa" stroke="#586d95" stroke-width="0.8"/><ellipse cx="564" cy="551" rx="56" ry="80" transform="rotate(20 564 551)" fill="url(#hubg)" stroke="#5b7098" stroke-width="1"/><ellipse cx="568" cy="548" rx="46" ry="70" transform="rotate(20 568 548)" fill="none" stroke="#7489ad" stroke-width="0.8"/><path d="M555 505C566 500 575 510 570 525L558 545L565 575C565 590 548 592 540 580C532 570 522 560 520 545C522 530 538 512 555 505z" fill="none" stroke="#5b7098" stroke-width="0.9"/><circle cx="552" cy="516" r="4.5" fill="none" stroke="#5b7098" stroke-width="0.9"/><circle cx="537" cy="570" r="4.5" fill="none" stroke="#5b7098" stroke-width="0.9"/><path d="M526 536L560 544L560 560L527 553z" fill="#d2def2" stroke="#7d92b8" stroke-width="0.6"/><path d="M526 616L562 595L580 605L577 627L556 644L527 634z" fill="#c99fb6" opacity="0.7" stroke="#a07f9a" stroke-width="0.6"/><path d="M555.8 548.8 L569.8 535.7 L644.3 496.6 L661.0 481.0 L679.0 484.0 L702.0 475.5 L722.0 463.7 L739.6 461.8 L755.0 468.6 L761.0 475.5 L767.0 483.0 L770.0 497.0 L769.0 514.7 L765.0 528.4 L757.0 528.4 L741.6 540.0 L718.0 561.8 L717.0 580.0 L707.0 622.0 L700.0 617.7 L663.0 634.0 L634.0 649.0 L563.0 623.0 L558.6 558.0z" fill="#a8bcdd" stroke="#3f5480" stroke-width="1.3" stroke-linejoin="round"/><path d="M558.6 548.8 L661.0 481.0 L716.0 503.0 L628.0 568.0z" fill="#b3c5e5" stroke="#566b94" stroke-width="0.9"/><path d="M628.0 568.0 L716.0 503.0 L717.0 580.0 L707.0 622.0 L633.0 648.0z" fill="#a4b8da" stroke="#566b94" stroke-width="0.9"/><path d="M558.6 548.8 L628.0 568.0 L633.0 648.0 L563.0 623.0z" fill="#aabedf" stroke="#566b94" stroke-width="0.9"/><path d="M679 484L702 475.5L722 463.7L739.6 461.8C752 470 760 500 757 528.4L741.6 540L718 561.8L716 503z" fill="#aabddd"/><path d="M706 479C725 485 738 500 741.6 536" fill="none" stroke="#566b94" stroke-width="0.9"/><path d="M739.6 461.8C752 470 760 500 757 528.4" fill="none" stroke="#566b94" stroke-width="0.9"/><path d="M757 470L767 483L770 497L769 514.7L765 528.4L757 528.4C760 500 758 480 757 470z" fill="#c0cfe8" stroke="#566b94" stroke-width="0.8"/><path d="M726 514C735 510 741 516 741 522V545C740 552 732 554 726 550C722 546 722 540 722 535V520z" fill="#aec1e0" stroke="#566b94" stroke-width="0.9"/><rect x="731" y="521" width="4.5" height="22" rx="1" fill="none" stroke="#566b94" stroke-width="0.8"/><path d="M597.8 539.4 L622.0 528.3 L664.8 541.3 L636.9 554.3z" fill="#c3d1ea" stroke="#566b94" stroke-width="0.8"/><path d="M607.0 539.0 L623.0 532.0 L652.0 541.0 L635.0 549.0z" fill="#cdc196"/><path d="M618.3 511.5 L644.3 498.4 L695.6 520.8 L670.4 533.8z" fill="#c3d1ea" stroke="#566b94" stroke-width="0.8"/><path d="M644.0 520.8 L670.0 511.5 L681.6 520.8 L655.5 528.3z" fill="#cdc196"/><path d="M576.0 571.0 L620.0 582.0 L621.0 633.0 L579.0 617.0z" fill="#c6d3ea" stroke="#566b94" stroke-width="0.8"/><path d="M588 581C600 577 619 583 619 605V628L594 618z" fill="#cdc196"/><circle cx="697.5" cy="572.5" r="10.5" fill="none" stroke="#566b94" stroke-width="0.9"/><circle cx="699" cy="572" r="4" fill="none" stroke="#566b94" stroke-width="0.8"/><circle cx="665" cy="596" r="12.5" fill="none" stroke="#566b94" stroke-width="0.9"/><path d="M664 591L676 588C680 590 680 600 676 603L664 605z" fill="#b9c9e4" stroke="#566b94" stroke-width="0.8"/><path d="M662 622.5H690C698 620 703 612 700 606L686 598L690 614C686 618 672 617 668 612z" fill="#aec1e0" stroke="#566b94" stroke-width="0.9"/><circle cx="632" cy="572" r="3" fill="none" stroke="#566b94" stroke-width="0.8"/><path d="M930.4 552L988.2 552L988.2 582C982 594 940 596 930.4 585z" fill="#c2a6c4" opacity="0.9" stroke="#a88aa8" stroke-width="0.8"/><path d="M935 562C950 568 975 567 987 560" fill="none" stroke="#9f8cb0" stroke-width="0.7"/><path d="M960 553V590M965 553V588" fill="none" stroke="#a08aa6" stroke-width="0.6"/><path d="M919.6 516.7L955 517L976.5 514.7L987 520.6L1005.4 544L1004 551L968.6 553L939 548L932.4 537.3L919.6 526.5z" fill="#b9cbe6" stroke="#566b94" stroke-width="1"/><path d="M919.6 521.5L932.4 532.3L939 543L968.6 548L1005.4 544" fill="none" stroke="#566b94" stroke-width="0.8"/><ellipse cx="928" cy="520.5" rx="5" ry="2.3" fill="none" stroke="#566b94" stroke-width="0.8"/><ellipse cx="977" cy="519.5" rx="4.5" ry="2" fill="none" stroke="#566b94" stroke-width="0.8"/><ellipse cx="996" cy="543" rx="5" ry="2.3" fill="none" stroke="#566b94" stroke-width="0.8"/><ellipse cx="947" cy="543" rx="4.5" ry="2" fill="none" stroke="#566b94" stroke-width="0.8"/><path d="M880.0 670.0 L890.0 660.0 L976.7 600.0 L1021.0 585.0 L1021.0 740.0 L970.0 772.0 L966.7 790.0 L878.3 753.3 L876.0 690.0z" fill="#a8bcdd" stroke="#3f5480" stroke-width="1.3" stroke-linejoin="round"/><path d="M880.0 670.0 L976.7 600.0 L1021.0 616.0 L1021.0 665.0 L970.0 706.7z" fill="#b3c5e5" stroke="#566b94" stroke-width="0.9"/><path d="M880.0 670.0 L970.0 706.7 L966.7 790.0 L878.3 753.3z" fill="#aabedf" stroke="#566b94" stroke-width="0.9"/><path d="M970.0 706.7 L1021.0 665.0 L1021.0 740.0 L966.7 790.0z" fill="#a4b8da" stroke="#566b94" stroke-width="0.9"/><path d="M926.7 666.7 L956.7 656.7 L996.7 670.0 L966.7 683.3z" fill="#c3d1ea" stroke="#566b94" stroke-width="0.8"/><path d="M936.0 667.0 L957.0 660.0 L985.0 670.0 L965.0 678.0z" fill="#cdc196"/><path d="M940.0 633.0 L970.0 621.7 L1018.0 640.0 L988.0 651.7z" fill="#c3d1ea" stroke="#566b94" stroke-width="0.8"/><path d="M970.0 636.0 L990.0 628.0 L1012.0 640.0 L990.0 647.0z" fill="#cdc196"/><path d="M906.7 705.0 L950.0 723.3 L950.0 766.7 L906.7 750.0z" fill="#c6d3ea" stroke="#566b94" stroke-width="0.8"/><path d="M917 712C930 705 948 715 948 738V765L917 752z" fill="#cdc196"/><path d="M912 752L925 742L940 758z" fill="#fff" stroke="#566b94" stroke-width="0.8"/><circle cx="972" cy="708" r="3" fill="none" stroke="#566b94" stroke-width="0.8"/><path d="M880 670L970 706.7L969 718L879 681z" fill="#b8c9e6" stroke="#566b94" stroke-width="0.8"/><path d="M889 683L887 757M895 686L893 759" fill="none" stroke="#566b94" stroke-width="0.8"/><circle cx="972" cy="711" r="3" fill="none" stroke="#566b94" stroke-width="0.8"/><path d="M578 553L630 572L629 582L577 563z" fill="#b8c9e6" stroke="#566b94" stroke-width="0.8"/><path d="M566 560L565 620M572 563L571 622" fill="none" stroke="#566b94" stroke-width="0.7"/><path d="M1021 676C1060 672 1150 680 1173 693C1182 705 1184 760 1183 793C1180 820 1165 860 1143 873C1125 890 1100 897 1073 897C1045 895 1015 885 1000 873C985 860 975 830 974 800C974 792 974.5 788 975.3 785.9L980.6 762.4L987.6 738.8L997 715.3L1006.5 698.8z" fill="url(#tread2)" stroke="#42578a" stroke-width="1.4" stroke-dasharray="1.2 1"/><ellipse cx="1123" cy="795" rx="52" ry="102" transform="rotate(21 1123 795)" fill="#6f84aa" stroke="#586d95" stroke-width="0.8"/><ellipse cx="1129" cy="790" rx="40" ry="90" transform="rotate(22 1129 790)" fill="url(#hubg)" stroke="#5b7098" stroke-width="1"/><ellipse cx="1132" cy="787" rx="31" ry="79" transform="rotate(22 1132 787)" fill="none" stroke="#7489ad" stroke-width="0.8"/></svg>
<div class="a" style="left:786px;top:816px;width:403px;height:23px;background:#f0f0f0;border:1px solid #e2e2e2;box-sizing:border-box;"></div>
<div class="a t" style="left:791.00px;top:819.67px;font-size:15.75px;line-height:15.75px;color:#111;">Select type, enter a name, then verify parent component</div>
<svg class="a" style="left:1380px;top:195px;" width="110" height="115" viewBox="0 0 110 115">
<defs><linearGradient id="vcf" x1="0" y1="0" x2="0" y2="1"><stop offset="0" stop-color="#f3f3f3"/><stop offset="1" stop-color="#d9d9d9"/></linearGradient>
<linearGradient id="vcr" x1="0" y1="0" x2="0" y2="1"><stop offset="0" stop-color="#eeeeee"/><stop offset="1" stop-color="#d0d0d0"/></linearGradient>
<filter id="blur4"><feGaussianBlur stdDeviation="4"/></filter></defs>
<g transform="translate(-1380 -195)">
<ellipse cx="1437" cy="284" rx="34" ry="12" fill="#8a8a8a" opacity="0.32" filter="url(#blur4)"/>
<path d="M1402.9 228.2L1431.5 213.6L1471 224.4L1443.6 243.5z" fill="#f1f1f1" stroke="#b0b0b0" stroke-width="0.8" stroke-dasharray="3 2"/>
<path d="M1402.9 228.2L1443.6 243.5L1443 286.8L1405.4 270.3z" fill="url(#vcf)"/>
<path d="M1443.6 243.5L1471 224.4L1469 265.2L1443 286.8z" fill="url(#vcr)"/>
<path d="M1443.6 243.5L1443 286.8M1469 265.2L1471 224.4" fill="none" stroke="#a8a8a8" stroke-width="0.8" stroke-dasharray="3 2"/>
<path d="M1443 286.8L1469 265.2" fill="none" stroke="#c8c8c8" stroke-width="0.6"/>
<rect x="1436" y="238" width="12" height="12" fill="#e2e2e8" opacity="0.8"/>
<text x="1409" y="258" font-family="Liberation Sans" font-weight="bold" font-size="9.5" fill="#9a9a9a" transform="rotate(19 1422 258)" letter-spacing="0.3">FRONT</text>
<text x="1447" y="262" font-family="Liberation Sans" font-weight="bold" font-size="8" fill="#9a9a9a" transform="rotate(-58 1457 256)">RIGHT</text>
<text x="0" y="2.7" text-anchor="middle" font-family="Liberation Sans" font-weight="bold" font-size="7.5" fill="#a5a5a5" transform="translate(1438.5 226) rotate(200)">TOP</text>
<path d="M1401 221.8L1405.4 270.3" stroke="#5a68f2" stroke-width="2"/>
<path d="M1405.4 270.3L1448.7 291.9" stroke="#f08a8a" stroke-width="2"/>
<text x="1395.5" y="218.7" font-family="Liberation Sans" font-size="12.5" fill="#7480f2">Z</text>
<text x="1451" y="300.5" font-family="Liberation Sans" font-size="12.5" fill="#f08a8a">X</text>
</g>
</svg>
<div class="a" style="left:1021px;top:339px;width:474px;height:365px;background:#f2f2f2;"></div>
<div class="a" style="left:1021px;top:339px;width:474px;height:32px;background:#f2f2f2;border:1px solid #c8c8c8;border-bottom:2px solid #c0c0c0;box-sizing:border-box;"></div>
<svg class="a" style="left:1036px;top:348px;" width="12" height="12" viewBox="0 0 12 12"><circle cx="6" cy="6" r="5.6" fill="#333"/><rect x="2.7" y="5" width="6.6" height="2" fill="#f2f2f2"/></svg>
<div class="a t" style="left:1052.50px;top:347.69px;font-size:13.6px;line-height:13.6px;color:#555;">NEW COMPONENT</div>
<svg class="a" style="left:1476px;top:351px;" width="14" height="8" viewBox="0 0 14 8"><path d="M0 0L7 4L0 8z M7 0L14 4L7 8z" fill="#333"/><rect x="12" y="3" width="2" height="2" fill="#333"/></svg>
<div class="a" style="left:1021px;top:371px;width:475px;height:289px;border:1px solid #c8c8c8;border-top:none;box-sizing:border-box;"></div>
<div class="a" style="left:1021px;top:659px;width:474px;height:46px;border:1px solid #cfcfcf;border-top:1px solid #c8c8c8;border-bottom:2px solid #c6c6c6;box-sizing:border-box;"></div>
<div class="a t" style="left:1037.50px;top:382.69px;font-size:13.6px;line-height:13.6px;color:#333;">Type</div>
<div class="a" style="left:1132px;top:372.5px;width:323px;height:33px;background:#fff;border:1px solid #cfcfcf;box-sizing:border-box;"></div>
<svg class="a" style="left:1136px;top:379px;" width="20" height="20" viewBox="0 0 20 20"><path d="M1 5L4.5 1H19V14.5L15.5 18.5H1z" fill="#e6e6ea" stroke="#333" stroke-width="1.1" stroke-linejoin="round"/><path d="M1 5H15.5V18.5M15.5 5L19 1" fill="none" stroke="#333" stroke-width="0.9"/><path d="M15.5 5L19 1V14.5L15.5 18.5z" fill="#d0d0d6"/></svg>
<div class="a t" style="left:1161.40px;top:382.69px;font-size:13.6px;line-height:13.6px;color:#333;">Standard</div>
<svg class="a" style="left:1441px;top:387px;" width="7" height="4.5" viewBox="0 0 7 4.5"><path d="M0 0H7L3.5 4.5Z" fill="#333"/></svg>
<div class="a t" style="left:1037.50px;top:419.69px;font-size:13.6px;line-height:13.6px;color:#333;">External</div>
<svg class="a" style="left:1137px;top:418px;" width="18" height="18" viewBox="0 0 18 18"><defs><linearGradient id="rg" x1="0" y1="0" x2="0" y2="1"><stop offset="0" stop-color="#f4f4f4"/><stop offset="1" stop-color="#c9c9c9"/></linearGradient></defs><circle cx="9" cy="9" r="8.2" fill="url(#rg)" stroke="#3a3a3a" stroke-width="1.2"/></svg>
<div class="a t" style="left:1037.50px;top:457.49px;font-size:13.6px;line-height:13.6px;color:#333;">Internal</div>
<svg class="a" style="left:1137px;top:455px;" width="18" height="18" viewBox="0 0 18 18"><circle cx="9" cy="9" r="8.2" fill="url(#rg)" stroke="#3a3a3a" stroke-width="1.2"/><circle cx="9" cy="9" r="4.6" fill="#000"/></svg>
<div class="a t" style="left:1037.50px;top:494.49px;font-size:13.6px;line-height:13.6px;color:#333;">Name</div>
<div class="a" style="left:1132.5px;top:485.4px;width:322px;height:32px;background:#fff;border:1px solid #cfcfcf;box-sizing:border-box;"></div>
<div class="a t" style="left:1136.00px;top:494.49px;font-size:13.6px;line-height:13.6px;color:#333;">top</div>
<div class="a" style="left:1155px;top:494px;width:1.2px;height:15px;background:#000;"></div>
<div class="a" style="left:1024px;top:527px;width:455px;height:1.5px;background:#c4c4c4;"></div>
<div class="a t" style="left:1037.50px;top:544.49px;font-size:13.6px;line-height:13.6px;color:#333;">From Bodies</div>
<svg class="a" style="left:1138px;top:543px;" width="17" height="17" viewBox="0 0 17 17"><defs><linearGradient id="cg" x1="0" y1="0" x2="0" y2="1"><stop offset="0" stop-color="#f6f6f6"/><stop offset="1" stop-color="#c8c8c8"/></linearGradient></defs><rect x="0.6" y="0.6" width="15.3" height="15.3" rx="3" fill="url(#cg)" stroke="#3a3a3a" stroke-width="1.2"/></svg>
<div class="a t" style="left:1037.50px;top:582.49px;font-size:13.6px;line-height:13.6px;color:#333;">Parent</div>
<div class="a" style="left:1132px;top:572.3px;width:96px;height:33.6px;background:#0696d7;"></div>
<svg class="a" style="left:1141px;top:580px;" width="13" height="19" viewBox="0 0 13 19"><path d="M1 1V16L4.8 12.5L8 18.5L10.5 17.3L7.4 11.4L12 11z" fill="#eee" stroke="#555" stroke-width="1" stroke-linejoin="round"/></svg>
<div class="a t" style="left:1159.00px;top:582.49px;font-size:13.6px;line-height:13.6px;color:#fff;">1 selected</div>
<svg class="a" style="left:1241.5px;top:583.5px;" width="11" height="11" viewBox="0 0 11 11"><path d="M1 1L10 10M10 1L1 10" stroke="#555" stroke-width="2.2"/></svg>
<div class="a" style="left:1024px;top:614px;width:455px;height:1.5px;background:#c4c4c4;"></div>
<div class="a t" style="left:1037.50px;top:632.49px;font-size:13.6px;line-height:13.6px;color:#333;">Activate</div>
<svg class="a" style="left:1138px;top:630px;" width="17" height="17" viewBox="0 0 17 17"><rect x="0.6" y="0.6" width="15.3" height="15.3" rx="3" fill="url(#cg)" stroke="#3a3a3a" stroke-width="1.2"/><path d="M3.8 8.5L7 12L12.5 3.5" fill="none" stroke="#111" stroke-width="1.4"/></svg>
<svg class="a" style="left:1032px;top:675px;" width="15" height="15" viewBox="0 0 15 15"><circle cx="7.5" cy="7.5" r="7.3" fill="#000"/><circle cx="7.5" cy="3.8" r="1.4" fill="#fff"/><path d="M5.5 6.2H8.6V11H9.8V12.3H5.3V11H6.4V7.4H5.5z" fill="#fff"/></svg>
<div class="a" style="left:1319px;top:670.2px;width:74.3px;height:23.4px;background:#e7e7e7;border:1px solid #c6c6c6;box-sizing:border-box;"></div>
<div class="a t" style="left:1345.60px;top:674.64px;font-size:14.6px;line-height:14.6px;color:#555;">OK</div>
<div class="a" style="left:1406px;top:670.2px;width:74.8px;height:23.4px;background:#e7e7e7;border:1px solid #c6c6c6;box-sizing:border-box;"></div>
<div class="a t" style="left:1420.60px;top:674.64px;font-size:14.6px;line-height:14.6px;color:#555;">Cancel</div>
<div class="a" style="left:6px;top:920px;width:374px;height:31px;background:#f1f1f1;border:1px solid #c9c9c9;border-top:none;border-bottom-width:2px;box-sizing:border-box;"></div>
<div class="a t" style="left:37.30px;top:929.49px;font-size:13.6px;line-height:13.6px;color:#555;">COMMENTS</div>
<svg class="a" style="left:355px;top:930px;" width="11" height="11" viewBox="0 0 11 11"><circle cx="5.5" cy="5.5" r="5.5" fill="#333"/><rect x="2.3" y="4.7" width="6.4" height="1.6" fill="#f1f1f1"/><rect x="4.7" y="2.3" width="1.6" height="6.4" fill="#f1f1f1"/></svg>
<div class="a" style="left:604px;top:919px;width:296px;height:30px;background:#f0f0f0;"></div>
<svg class="a" style="left:607px;top:924px;" width="21" height="21" viewBox="0 0 21 21">
<path d="M10.5 1V20" stroke="#555" stroke-width="1.2"/><path d="M8.5 4L10.5 0.5L12.5 4z" fill="#555"/>
<rect x="9.3" y="3" width="2.4" height="17" fill="#ddd" stroke="#555" stroke-width="0.8"/>
<path d="M4 15C0 13 0 10 4 8.5M16 8.5C20 10 20 13 15 15.5L8 16" fill="none" stroke="#222" stroke-width="1.5"/>
<path d="M3 16L7 13V19z" fill="#222"/></svg>
<svg class="a" style="left:634px;top:932px;" width="6" height="5" viewBox="0 0 6 5"><path d="M0 0H6L3.0 5Z" fill="#222"/></svg>
<svg class="a" style="left:648px;top:924px;" width="21" height="21" viewBox="0 0 21 21">
<path d="M3 4L6 2L8 4.5L12 1.5L14 4L16.5 2.5L17 5" fill="none" stroke="#555" stroke-width="1.2"/>
<rect x="1" y="6" width="19" height="14" rx="1" fill="#f8f8f8" stroke="#555" stroke-width="1.4"/>
<rect x="5" y="11" width="11" height="4" fill="#aaa" stroke="#555" stroke-width="0.8"/></svg>
<svg class="a" style="left:681px;top:923px;" width="21" height="22" viewBox="0 0 21 22">
<path d="M5 12V6.5a1.5 1.5 0 0 1 3 0V11V3.5a1.5 1.5 0 0 1 3 0V11V3a1.5 1.5 0 0 1 3 0V11V5a1.5 1.5 0 0 1 3 0V14C17 18 15 21 11 21C8 21 6.5 19.5 5 17L1.5 12.5a1.4 1.4 0 0 1 2.2-1.8z" fill="#f6f6f6" stroke="#333" stroke-width="1.1"/></svg>
<svg class="a" style="left:713px;top:923px;" width="22" height="22" viewBox="0 0 22 22">
<circle cx="8" cy="11" r="6.2" fill="#d8ebf5" stroke="#555" stroke-width="1.4"/>
<path d="M12.5 15.5L17.5 20.5" stroke="#333" stroke-width="2.6" stroke-linecap="round"/>
<path d="M17 1.5V8M13.8 4.8H20.2M14 10H20" stroke="#333" stroke-width="1.1"/></svg>
<svg class="a" style="left:746px;top:923px;" width="22" height="22" viewBox="0 0 22 22">
<circle cx="9" cy="9" r="7.5" fill="#e8f3f8" stroke="#555" stroke-width="1.6"/>
<rect x="5.5" y="5.5" width="7" height="7" fill="#f8f8f8" stroke="#555" stroke-width="1"/>
<path d="M14.5 14.5L20 20" stroke="#333" stroke-width="2.6" stroke-linecap="round"/></svg>
<svg class="a" style="left:773px;top:932px;" width="6" height="5" viewBox="0 0 6 5"><path d="M0 0H6L3.0 5Z" fill="#222"/></svg>
<svg class="a" style="left:787px;top:923px;" width="21" height="22" viewBox="0 0 21 22">
<rect x="1" y="2" width="19" height="14" rx="1" fill="#bbb" stroke="#666" stroke-width="1.2"/>
<rect x="3.5" y="4.5" width="14" height="9" fill="#87b7ea"/>
<path d="M7 20H14M10.5 16V20" stroke="#666" stroke-width="1.6"/></svg>
<svg class="a" style="left:811px;top:932px;" width="6" height="5" viewBox="0 0 6 5"><path d="M0 0H6L3.0 5Z" fill="#222"/></svg>
<svg class="a" style="left:826px;top:923px;" width="21" height="21" viewBox="0 0 21 21"><rect x="0.5" y="0.5" width="20" height="20" fill="#7d7d7d" stroke="#5a5a5a" stroke-width="1"/><path d="M3.9 1V20M1 3.9H20" stroke="#e6e6e6" stroke-width="0.8"/><path d="M7.3 1V20M1 7.3H20" stroke="#e6e6e6" stroke-width="0.8"/><path d="M10.7 1V20M1 10.7H20" stroke="#e6e6e6" stroke-width="0.8"/><path d="M14.1 1V20M1 14.1H20" stroke="#e6e6e6" stroke-width="0.8"/><path d="M17.5 1V20M1 17.5H20" stroke="#e6e6e6" stroke-width="0.8"/></svg>
<svg class="a" style="left:850px;top:932px;" width="7" height="5" viewBox="0 0 7 5"><path d="M0 0H7L3.5 5Z" fill="#222"/></svg>
<svg class="a" style="left:864px;top:924px;" width="21" height="19" viewBox="0 0 21 19">
<rect x="0.7" y="0.7" width="19.5" height="17.5" rx="1" fill="#4466aa"/>
<rect x="2.5" y="2.5" width="7" height="6" fill="#aac3ea"/><rect x="11.3" y="2.5" width="7" height="6" fill="#aac3ea"/>
<rect x="2.5" y="10.3" width="7" height="6" fill="#aac3ea"/><rect x="11.3" y="10.3" width="7" height="6" fill="#aac3ea"/></svg>
<svg class="a" style="left:889px;top:932px;" width="7" height="5" viewBox="0 0 7 5"><path d="M0 0H7L3.5 5Z" fill="#222"/></svg>
<div class="a t" style="left:1397.00px;top:930.39px;font-size:13.6px;line-height:13.6px;color:#222;font-weight:bold;">version 4 v4</div>
<div class="a" style="left:1px;top:957px;width:1500px;height:62px;background:#f1f1f1;"></div>
<div class="a" style="left:1px;top:957px;width:1500px;height:1px;background:#d8d8d8;"></div>
<div class="a" style="left:6px;top:958px;width:302px;height:8px;background:#c9c9c9;border-radius:0 0 4px 4px;"></div>
<svg class="a" style="left:15px;top:984px;" width="16" height="19" viewBox="0 0 16 19"><rect x="0" y="0" width="2.2" height="19" fill="#444"/><path d="M15 1.5V17.5L3 9.5z" fill="#444"/></svg>
<svg class="a" style="left:45px;top:985px;" width="17" height="17" viewBox="0 0 17 17"><path d="M11 0V17L0 8.5z" fill="#444"/><rect x="13.5" y="5" width="2.2" height="7" fill="#444"/></svg>
<svg class="a" style="left:77px;top:983px;" width="15" height="20" viewBox="0 0 15 20"><path d="M0 0V20L15 10z" fill="#444"/></svg>
<svg class="a" style="left:107px;top:985px;" width="17" height="17" viewBox="0 0 17 17"><path d="M6 0V17L17 8.5z" fill="#444"/><rect x="0" y="5" width="2.6" height="7" fill="#444"/></svg>
<svg class="a" style="left:140px;top:984px;" width="16" height="19" viewBox="0 0 16 19"><path d="M0 1.5V17.5L12 9.5z" fill="#444"/><rect x="13" y="0" width="2.2" height="19" fill="#444"/></svg>
<div class="a" style="left:181px;top:967px;width:55px;height:7px;background:#e99c4f;"></div>
<div class="a" style="left:241px;top:967px;width:85px;height:7px;background:#4552d4;"></div>
<div class="a" style="left:331px;top:967px;width:416px;height:7px;background:#e99c4f;"></div>
<svg class="a" style="left:184px;top:977px;" width="20" height="20" viewBox="0 0 20 20"><path d="M1 5L4.5 1H14V17L11 19.5H1z" fill="#ddd" stroke="#555" stroke-width="1"/><path d="M11 5V19.5M1 5H11L14 2" fill="none" stroke="#555" stroke-width="0.8"/><path d="M14 0L15.2 3.5L18.5 2L16.5 5L19.5 6.5L16 7.2L17 10.5L14 8.5L12 11L11.8 7.5L8.5 7L11.5 5L10 2L13 3.5z" fill="#f7a600"/></svg>
<svg class="a" style="left:214px;top:977px;" width="20" height="20" viewBox="0 0 20 20"><path d="M12 0L19 6L15 8L13 13L9.5 11L2 19L1 18L8 9.5L6 6L11 4z" fill="#e3904f"/></svg>
<svg class="a" style="left:244px;top:977px;" width="20" height="20" viewBox="0 0 20 20"><rect x="1.5" y="1.5" width="14" height="15" fill="none" stroke="#555" stroke-width="1"/><rect x="0" y="0" width="3" height="3" fill="#1d8fe0"/><rect x="14" y="0" width="3" height="3" fill="#1d8fe0"/><rect x="0" y="15" width="3" height="3" fill="#1d8fe0"/><path d="M10 19L18 11L19.5 12.5L11.5 20.5z" fill="#f5c240"/><rect x="16" y="10" width="4" height="3" fill="#e84040" transform="rotate(45 18 11.5)"/></svg>
<svg class="a" style="left:274px;top:977px;" width="20" height="20" viewBox="0 0 20 20"><path d="M1 4L4 1H13V14L10 17H1z" fill="#65ade4"/><path d="M1 4L4 1H13L10 4z" fill="#9dd3fa"/><path d="M10 4L13 1V14L10 17z" fill="#4a92cc"/><path d="M1 17H13L10 20H1z" fill="#ccc"/><path d="M17 3V17" stroke="#333" stroke-width="1.3"/><path d="M15 5L17 1.5L19 5z" fill="#333"/></svg>
<svg class="a" style="left:304px;top:977px;" width="20" height="20" viewBox="0 0 20 20"><path d="M1 19V5L5 1H10C15 1 19 5 19 10V17L17 19z" fill="#ddd" stroke="#666" stroke-width="1"/><path d="M10 1C15 1 19 5 19 10L16 13C16 8 13 5 8 5z" fill="#5ea6dd"/></svg>
<svg class="a" style="left:334px;top:977px;" width="20" height="20" viewBox="0 0 20 20"><path d="M0.6 4.3L4.3 0.6H19.4V15.2L15.2 19.4H0.6z" fill="#d9d9d9" stroke="#555" stroke-width="1.1" stroke-linejoin="round"/><rect x="17.6" y="0.6" width="1.9" height="15" fill="#5a5a5a"/><path d="M8.5 7.5L11 5a2.6 2.6 0 0 1 3.7 3.7L12 11.4M11 12L8.5 14.5a2.6 2.6 0 0 1-3.7-3.7L7.5 8.1" fill="none" stroke="#888" stroke-width="1.1"/><path d="M8 11.5L11.5 8" stroke="#666" stroke-width="1.2"/></svg>
<svg class="a" style="left:364px;top:977px;" width="20" height="20" viewBox="0 0 20 20"><path d="M1.2 18.5V5C1.2 2 2.5 0.5 4.5 0.5C6.5 0.5 8 1.5 8 3V12L3 18.8z" fill="#dadada" stroke="#555" stroke-width="1"/><rect x="7" y="1" width="2" height="11" fill="#5a5a5a"/><path d="M13.5 1.5C16 1.5 19.5 5 19.5 8V18.8L14.5 15V11L13.5 11z" fill="#dadada" stroke="#555" stroke-width="1"/><rect x="13.2" y="1.3" width="1.6" height="6" fill="#5a5a5a"/><path d="M6.5 9.5V13.5" stroke="#1d8fe0" stroke-width="1.3"/><path d="M12.6 5V9.5" stroke="#1d8fe0" stroke-width="1.3"/><path d="M19.5 8V18.5" stroke="#5a5a5a" stroke-width="1.3"/></svg>
<svg class="a" style="left:394px;top:977px;" width="20" height="20" viewBox="0 0 20 20"><path d="M0.6 4.3L4.3 0.6H19.4V15.2L15.2 19.4H0.6z" fill="#d9d9d9" stroke="#555" stroke-width="1.1" stroke-linejoin="round"/><rect x="17.6" y="0.6" width="1.9" height="15" fill="#5a5a5a"/><path d="M8.5 7.5L11 5a2.6 2.6 0 0 1 3.7 3.7L12 11.4M11 12L8.5 14.5a2.6 2.6 0 0 1-3.7-3.7L7.5 8.1" fill="none" stroke="#888" stroke-width="1.1"/><path d="M8 11.5L11.5 8" stroke="#666" stroke-width="1.2"/></svg>
<svg class="a" style="left:424px;top:977px;" width="20" height="20" viewBox="0 0 20 20"><rect x="0.7" y="0.7" width="18.6" height="18.6" fill="#5ea6dd" stroke="#555" stroke-width="1.3"/><rect x="10.3" y="1.5" width="8.3" height="8.3" fill="#fff" stroke="#555" stroke-width="1.2"/><rect x="1.5" y="10.3" width="8.3" height="8.3" fill="#fff" stroke="#555" stroke-width="1.2"/></svg>
<svg class="a" style="left:454px;top:977px;" width="20" height="20" viewBox="0 0 20 20"><path d="M1.2 18.5V5C1.2 2 2.5 0.5 4.5 0.5C6.5 0.5 8 1.5 8 3V12L3 18.8z" fill="#dadada" stroke="#555" stroke-width="1"/><rect x="7" y="1" width="2" height="11" fill="#5a5a5a"/><path d="M13.5 1.5C16 1.5 19.5 5 19.5 8V18.8L14.5 15V11L13.5 11z" fill="#dadada" stroke="#555" stroke-width="1"/><rect x="13.2" y="1.3" width="1.6" height="6" fill="#5a5a5a"/><path d="M6.5 9.5V13.5" stroke="#1d8fe0" stroke-width="1.3"/><path d="M12.6 5V9.5" stroke="#1d8fe0" stroke-width="1.3"/><path d="M19.5 8V18.5" stroke="#5a5a5a" stroke-width="1.3"/></svg>
<svg class="a" style="left:484px;top:977px;" width="20" height="20" viewBox="0 0 20 20"><path d="M0.6 4.3L4.3 0.6H19.4V15.2L15.2 19.4H0.6z" fill="#d9d9d9" stroke="#555" stroke-width="1.1" stroke-linejoin="round"/><rect x="17.6" y="0.6" width="1.9" height="15" fill="#5a5a5a"/><path d="M8.5 7.5L11 5a2.6 2.6 0 0 1 3.7 3.7L12 11.4M11 12L8.5 14.5a2.6 2.6 0 0 1-3.7-3.7L7.5 8.1" fill="none" stroke="#888" stroke-width="1.1"/><path d="M8 11.5L11.5 8" stroke="#666" stroke-width="1.2"/></svg>
<svg class="a" style="left:514px;top:977px;" width="20" height="20" viewBox="0 0 20 20"><rect x="0.7" y="0.7" width="18.6" height="18.6" fill="#5ea6dd" stroke="#555" stroke-width="1.3"/><rect x="10.3" y="1.5" width="8.3" height="8.3" fill="#fff" stroke="#555" stroke-width="1.2"/><rect x="1.5" y="10.3" width="8.3" height="8.3" fill="#fff" stroke="#555" stroke-width="1.2"/></svg>
<svg class="a" style="left:544px;top:977px;" width="20" height="20" viewBox="0 0 20 20"><path d="M1.2 18.5V5C1.2 2 2.5 0.5 4.5 0.5C6.5 0.5 8 1.5 8 3V12L3 18.8z" fill="#dadada" stroke="#555" stroke-width="1"/><rect x="7" y="1" width="2" height="11" fill="#5a5a5a"/><path d="M13.5 1.5C16 1.5 19.5 5 19.5 8V18.8L14.5 15V11L13.5 11z" fill="#dadada" stroke="#555" stroke-width="1"/><rect x="13.2" y="1.3" width="1.6" height="6" fill="#5a5a5a"/><path d="M6.5 9.5V13.5" stroke="#1d8fe0" stroke-width="1.3"/><path d="M12.6 5V9.5" stroke="#1d8fe0" stroke-width="1.3"/><path d="M19.5 8V18.5" stroke="#5a5a5a" stroke-width="1.3"/></svg>
<svg class="a" style="left:574px;top:977px;" width="20" height="20" viewBox="0 0 20 20"><path d="M0.6 4.3L4.3 0.6H19.4V15.2L15.2 19.4H0.6z" fill="#d9d9d9" stroke="#555" stroke-width="1.1" stroke-linejoin="round"/><rect x="17.6" y="0.6" width="1.9" height="15" fill="#5a5a5a"/><path d="M8.5 7.5L11 5a2.6 2.6 0 0 1 3.7 3.7L12 11.4M11 12L8.5 14.5a2.6 2.6 0 0 1-3.7-3.7L7.5 8.1" fill="none" stroke="#888" stroke-width="1.1"/><path d="M8 11.5L11.5 8" stroke="#666" stroke-width="1.2"/></svg>
<svg class="a" style="left:604px;top:977px;" width="20" height="20" viewBox="0 0 20 20"><rect x="0.7" y="0.7" width="18.6" height="18.6" fill="#5ea6dd" stroke="#555" stroke-width="1.3"/><rect x="10.3" y="1.5" width="8.3" height="8.3" fill="#fff" stroke="#555" stroke-width="1.2"/><rect x="1.5" y="10.3" width="8.3" height="8.3" fill="#fff" stroke="#555" stroke-width="1.2"/></svg>
<svg class="a" style="left:634px;top:977px;" width="20" height="20" viewBox="0 0 20 20"><path d="M1.2 18.5V5C1.2 2 2.5 0.5 4.5 0.5C6.5 0.5 8 1.5 8 3V12L3 18.8z" fill="#dadada" stroke="#555" stroke-width="1"/><rect x="7" y="1" width="2" height="11" fill="#5a5a5a"/><path d="M13.5 1.5C16 1.5 19.5 5 19.5 8V18.8L14.5 15V11L13.5 11z" fill="#dadada" stroke="#555" stroke-width="1"/><rect x="13.2" y="1.3" width="1.6" height="6" fill="#5a5a5a"/><path d="M6.5 9.5V13.5" stroke="#1d8fe0" stroke-width="1.3"/><path d="M12.6 5V9.5" stroke="#1d8fe0" stroke-width="1.3"/><path d="M19.5 8V18.5" stroke="#5a5a5a" stroke-width="1.3"/></svg>
<svg class="a" style="left:664px;top:977px;" width="20" height="20" viewBox="0 0 20 20"><path d="M0.6 4.3L4.3 0.6H19.4V15.2L15.2 19.4H0.6z" fill="#d9d9d9" stroke="#555" stroke-width="1.1" stroke-linejoin="round"/><rect x="17.6" y="0.6" width="1.9" height="15" fill="#5a5a5a"/><path d="M8.5 7.5L11 5a2.6 2.6 0 0 1 3.7 3.7L12 11.4M11 12L8.5 14.5a2.6 2.6 0 0 1-3.7-3.7L7.5 8.1" fill="none" stroke="#888" stroke-width="1.1"/><path d="M8 11.5L11.5 8" stroke="#666" stroke-width="1.2"/></svg>
<svg class="a" style="left:694px;top:977px;" width="20" height="20" viewBox="0 0 20 20"><rect x="0.7" y="0.7" width="18.6" height="18.6" fill="#5ea6dd" stroke="#555" stroke-width="1.3"/><rect x="10.3" y="1.5" width="8.3" height="8.3" fill="#fff" stroke="#555" stroke-width="1.2"/><rect x="1.5" y="10.3" width="8.3" height="8.3" fill="#fff" stroke="#555" stroke-width="1.2"/></svg>
<svg class="a" style="left:724px;top:977px;" width="20" height="20" viewBox="0 0 20 20"><path d="M1.2 18.5V5C1.2 2 2.5 0.5 4.5 0.5C6.5 0.5 8 1.5 8 3V12L3 18.8z" fill="#dadada" stroke="#555" stroke-width="1"/><rect x="7" y="1" width="2" height="11" fill="#5a5a5a"/><path d="M13.5 1.5C16 1.5 19.5 5 19.5 8V18.8L14.5 15V11L13.5 11z" fill="#dadada" stroke="#555" stroke-width="1"/><rect x="13.2" y="1.3" width="1.6" height="6" fill="#5a5a5a"/><path d="M6.5 9.5V13.5" stroke="#1d8fe0" stroke-width="1.3"/><path d="M12.6 5V9.5" stroke="#1d8fe0" stroke-width="1.3"/><path d="M19.5 8V18.5" stroke="#5a5a5a" stroke-width="1.3"/></svg>
<svg class="a" style="left:754px;top:977px;opacity:0.3;" width="20" height="20" viewBox="0 0 20 20"><path d="M1 5L4.5 1H14V17L11 19.5H1z" fill="#ddd" stroke="#555" stroke-width="1"/><path d="M11 5V19.5M1 5H11L14 2" fill="none" stroke="#555" stroke-width="0.8"/><path d="M14 0L15.2 3.5L18.5 2L16.5 5L19.5 6.5L16 7.2L17 10.5L14 8.5L12 11L11.8 7.5L8.5 7L11.5 5L10 2L13 3.5z" fill="#f7a600"/></svg>
<svg class="a" style="left:784px;top:977px;opacity:0.3;" width="20" height="20" viewBox="0 0 20 20"><path d="M1 19V6L5 1H8V19z" fill="#ddd" stroke="#666" stroke-width="1"/><path d="M5 19V6L9 1V14z" fill="#5ec27a"/><path d="M13 19V6L17 1V14z" fill="#e59a62"/></svg>
<svg class="a" style="left:814px;top:977px;opacity:0.3;" width="20" height="20" viewBox="0 0 20 20"><rect x="1.5" y="1.5" width="14" height="15" fill="none" stroke="#555" stroke-width="1"/><rect x="0" y="0" width="3" height="3" fill="#1d8fe0"/><rect x="14" y="0" width="3" height="3" fill="#1d8fe0"/><rect x="0" y="15" width="3" height="3" fill="#1d8fe0"/><path d="M10 19L18 11L19.5 12.5L11.5 20.5z" fill="#f5c240"/><rect x="16" y="10" width="4" height="3" fill="#e84040" transform="rotate(45 18 11.5)"/></svg>
<svg class="a" style="left:844px;top:977px;opacity:0.3;" width="20" height="20" viewBox="0 0 20 20"><path d="M1 4L4 1H13V14L10 17H1z" fill="#65ade4"/><path d="M1 4L4 1H13L10 4z" fill="#9dd3fa"/><path d="M10 4L13 1V14L10 17z" fill="#4a92cc"/><path d="M1 17H13L10 20H1z" fill="#ccc"/><path d="M17 3V17" stroke="#333" stroke-width="1.3"/><path d="M15 5L17 1.5L19 5z" fill="#333"/></svg>
<svg class="a" style="left:874px;top:977px;opacity:0.3;" width="20" height="20" viewBox="0 0 20 20"><path d="M1 19V5L5 1H10C15 1 19 5 19 10V17L17 19z" fill="#ddd" stroke="#666" stroke-width="1"/><path d="M10 1C15 1 19 5 19 10L16 13C16 8 13 5 8 5z" fill="#5ea6dd"/></svg>
<svg class="a" style="left:904px;top:977px;opacity:0.3;" width="20" height="20" viewBox="0 0 20 20"><rect x="1.5" y="1.5" width="14" height="15" fill="none" stroke="#555" stroke-width="1"/><rect x="0" y="0" width="3" height="3" fill="#1d8fe0"/><rect x="14" y="0" width="3" height="3" fill="#1d8fe0"/><rect x="0" y="15" width="3" height="3" fill="#1d8fe0"/><path d="M10 19L18 11L19.5 12.5L11.5 20.5z" fill="#f5c240"/><rect x="16" y="10" width="4" height="3" fill="#e84040" transform="rotate(45 18 11.5)"/></svg>
<svg class="a" style="left:934px;top:977px;opacity:0.3;" width="20" height="20" viewBox="0 0 20 20"><path d="M1 4L4 1H13V14L10 17H1z" fill="#65ade4"/><path d="M1 4L4 1H13L10 4z" fill="#9dd3fa"/><path d="M10 4L13 1V14L10 17z" fill="#4a92cc"/><path d="M1 17H13L10 20H1z" fill="#ccc"/><path d="M17 3V17" stroke="#333" stroke-width="1.3"/><path d="M15 5L17 1.5L19 5z" fill="#333"/></svg>
<svg class="a" style="left:964px;top:977px;opacity:0.3;" width="20" height="20" viewBox="0 0 20 20"><path d="M0.6 4.3L4.3 0.6H19.4V15.2L15.2 19.4H0.6z" fill="#d9d9d9" stroke="#555" stroke-width="1.1" stroke-linejoin="round"/><rect x="17.6" y="0.6" width="1.9" height="15" fill="#5a5a5a"/><path d="M8.5 7.5L11 5a2.6 2.6 0 0 1 3.7 3.7L12 11.4M11 12L8.5 14.5a2.6 2.6 0 0 1-3.7-3.7L7.5 8.1" fill="none" stroke="#888" stroke-width="1.1"/><path d="M8 11.5L11.5 8" stroke="#666" stroke-width="1.2"/></svg>
<svg class="a" style="left:994px;top:977px;opacity:0.3;" width="20" height="20" viewBox="0 0 20 20"><rect x="0.7" y="0.7" width="18.6" height="18.6" fill="#5ea6dd" stroke="#555" stroke-width="1.3"/><rect x="10.3" y="1.5" width="8.3" height="8.3" fill="#fff" stroke="#555" stroke-width="1.2"/><rect x="1.5" y="10.3" width="8.3" height="8.3" fill="#fff" stroke="#555" stroke-width="1.2"/></svg>
<svg class="a" style="left:1024px;top:977px;opacity:0.3;" width="20" height="20" viewBox="0 0 20 20"><path d="M1.2 18.5V5C1.2 2 2.5 0.5 4.5 0.5C6.5 0.5 8 1.5 8 3V12L3 18.8z" fill="#dadada" stroke="#555" stroke-width="1"/><rect x="7" y="1" width="2" height="11" fill="#5a5a5a"/><path d="M13.5 1.5C16 1.5 19.5 5 19.5 8V18.8L14.5 15V11L13.5 11z" fill="#dadada" stroke="#555" stroke-width="1"/><rect x="13.2" y="1.3" width="1.6" height="6" fill="#5a5a5a"/><path d="M6.5 9.5V13.5" stroke="#1d8fe0" stroke-width="1.3"/><path d="M12.6 5V9.5" stroke="#1d8fe0" stroke-width="1.3"/><path d="M19.5 8V18.5" stroke="#5a5a5a" stroke-width="1.3"/></svg>
<svg class="a" style="left:1054px;top:977px;opacity:0.3;" width="20" height="20" viewBox="0 0 20 20"><path d="M1 5L4.5 1H14V17L11 19.5H1z" fill="#ddd" stroke="#555" stroke-width="1"/><path d="M11 5V19.5M1 5H11L14 2" fill="none" stroke="#555" stroke-width="0.8"/><path d="M14 0L15.2 3.5L18.5 2L16.5 5L19.5 6.5L16 7.2L17 10.5L14 8.5L12 11L11.8 7.5L8.5 7L11.5 5L10 2L13 3.5z" fill="#f7a600"/></svg>
<svg class="a" style="left:1084px;top:977px;opacity:0.3;" width="20" height="20" viewBox="0 0 20 20"><path d="M0.6 4.3L4.3 0.6H19.4V15.2L15.2 19.4H0.6z" fill="#d9d9d9" stroke="#555" stroke-width="1.1" stroke-linejoin="round"/><rect x="17.6" y="0.6" width="1.9" height="15" fill="#5a5a5a"/><path d="M8.5 7.5L11 5a2.6 2.6 0 0 1 3.7 3.7L12 11.4M11 12L8.5 14.5a2.6 2.6 0 0 1-3.7-3.7L7.5 8.1" fill="none" stroke="#888" stroke-width="1.1"/><path d="M8 11.5L11.5 8" stroke="#666" stroke-width="1.2"/></svg>
<svg class="a" style="left:1114px;top:977px;opacity:0.3;" width="20" height="20" viewBox="0 0 20 20"><path d="M0.6 4.3L4.3 0.6H19.4V15.2L15.2 19.4H0.6z" fill="#d9d9d9" stroke="#555" stroke-width="1.1" stroke-linejoin="round"/><rect x="17.6" y="0.6" width="1.9" height="15" fill="#5a5a5a"/><path d="M8.5 7.5L11 5a2.6 2.6 0 0 1 3.7 3.7L12 11.4M11 12L8.5 14.5a2.6 2.6 0 0 1-3.7-3.7L7.5 8.1" fill="none" stroke="#888" stroke-width="1.1"/><path d="M8 11.5L11.5 8" stroke="#666" stroke-width="1.2"/></svg>
<svg class="a" style="left:1144px;top:977px;opacity:0.3;" width="20" height="20" viewBox="0 0 20 20"><path d="M1.2 18.5V5C1.2 2 2.5 0.5 4.5 0.5C6.5 0.5 8 1.5 8 3V12L3 18.8z" fill="#dadada" stroke="#555" stroke-width="1"/><rect x="7" y="1" width="2" height="11" fill="#5a5a5a"/><path d="M13.5 1.5C16 1.5 19.5 5 19.5 8V18.8L14.5 15V11L13.5 11z" fill="#dadada" stroke="#555" stroke-width="1"/><rect x="13.2" y="1.3" width="1.6" height="6" fill="#5a5a5a"/><path d="M6.5 9.5V13.5" stroke="#1d8fe0" stroke-width="1.3"/><path d="M12.6 5V9.5" stroke="#1d8fe0" stroke-width="1.3"/><path d="M19.5 8V18.5" stroke="#5a5a5a" stroke-width="1.3"/></svg>
<svg class="a" style="left:1174px;top:977px;opacity:0.3;" width="20" height="20" viewBox="0 0 20 20"><rect x="1" y="1" width="8" height="8" fill="#fff" stroke="#666" stroke-width="1"/><rect x="10" y="10" width="9" height="9" fill="#fff" stroke="#666" stroke-width="1"/><path d="M4 11V15H9" fill="none" stroke="#666" stroke-width="1"/></svg>
<svg class="a" style="left:1204px;top:977px;opacity:0.3;" width="20" height="20" viewBox="0 0 20 20"><rect x="1" y="1" width="8" height="8" fill="#fff" stroke="#666" stroke-width="1"/><rect x="10" y="10" width="9" height="9" fill="#fff" stroke="#666" stroke-width="1"/><path d="M4 11V15H9" fill="none" stroke="#666" stroke-width="1"/></svg>
<svg class="a" style="left:1234px;top:977px;opacity:0.3;" width="20" height="20" viewBox="0 0 20 20"><rect x="1" y="1" width="8" height="8" fill="#fff" stroke="#666" stroke-width="1"/><rect x="10" y="10" width="9" height="9" fill="#fff" stroke="#666" stroke-width="1"/><path d="M4 11V15H9" fill="none" stroke="#666" stroke-width="1"/></svg>
<svg class="a" style="left:1264px;top:977px;opacity:0.3;" width="20" height="20" viewBox="0 0 20 20"><path d="M1.2 18.5V5C1.2 2 2.5 0.5 4.5 0.5C6.5 0.5 8 1.5 8 3V12L3 18.8z" fill="#dadada" stroke="#555" stroke-width="1"/><rect x="7" y="1" width="2" height="11" fill="#5a5a5a"/><path d="M13.5 1.5C16 1.5 19.5 5 19.5 8V18.8L14.5 15V11L13.5 11z" fill="#dadada" stroke="#555" stroke-width="1"/><rect x="13.2" y="1.3" width="1.6" height="6" fill="#5a5a5a"/><path d="M6.5 9.5V13.5" stroke="#1d8fe0" stroke-width="1.3"/><path d="M12.6 5V9.5" stroke="#1d8fe0" stroke-width="1.3"/><path d="M19.5 8V18.5" stroke="#5a5a5a" stroke-width="1.3"/></svg>
<svg class="a" style="left:1294px;top:977px;opacity:0.3;" width="20" height="20" viewBox="0 0 20 20"><path d="M1.2 18.5V5C1.2 2 2.5 0.5 4.5 0.5C6.5 0.5 8 1.5 8 3V12L3 18.8z" fill="#dadada" stroke="#555" stroke-width="1"/><rect x="7" y="1" width="2" height="11" fill="#5a5a5a"/><path d="M13.5 1.5C16 1.5 19.5 5 19.5 8V18.8L14.5 15V11L13.5 11z" fill="#dadada" stroke="#555" stroke-width="1"/><rect x="13.2" y="1.3" width="1.6" height="6" fill="#5a5a5a"/><path d="M6.5 9.5V13.5" stroke="#1d8fe0" stroke-width="1.3"/><path d="M12.6 5V9.5" stroke="#1d8fe0" stroke-width="1.3"/><path d="M19.5 8V18.5" stroke="#5a5a5a" stroke-width="1.3"/></svg>
<svg class="a" style="left:1324px;top:977px;opacity:0.3;" width="20" height="20" viewBox="0 0 20 20"><path d="M1.2 18.5V5C1.2 2 2.5 0.5 4.5 0.5C6.5 0.5 8 1.5 8 3V12L3 18.8z" fill="#dadada" stroke="#555" stroke-width="1"/><rect x="7" y="1" width="2" height="11" fill="#5a5a5a"/><path d="M13.5 1.5C16 1.5 19.5 5 19.5 8V18.8L14.5 15V11L13.5 11z" fill="#dadada" stroke="#555" stroke-width="1"/><rect x="13.2" y="1.3" width="1.6" height="6" fill="#5a5a5a"/><path d="M6.5 9.5V13.5" stroke="#1d8fe0" stroke-width="1.3"/><path d="M12.6 5V9.5" stroke="#1d8fe0" stroke-width="1.3"/><path d="M19.5 8V18.5" stroke="#5a5a5a" stroke-width="1.3"/></svg>
<svg class="a" style="left:1354px;top:977px;opacity:0.3;" width="20" height="20" viewBox="0 0 20 20"><path d="M1.2 18.5V5C1.2 2 2.5 0.5 4.5 0.5C6.5 0.5 8 1.5 8 3V12L3 18.8z" fill="#dadada" stroke="#555" stroke-width="1"/><rect x="7" y="1" width="2" height="11" fill="#5a5a5a"/><path d="M13.5 1.5C16 1.5 19.5 5 19.5 8V18.8L14.5 15V11L13.5 11z" fill="#dadada" stroke="#555" stroke-width="1"/><rect x="13.2" y="1.3" width="1.6" height="6" fill="#5a5a5a"/><path d="M6.5 9.5V13.5" stroke="#1d8fe0" stroke-width="1.3"/><path d="M12.6 5V9.5" stroke="#1d8fe0" stroke-width="1.3"/><path d="M19.5 8V18.5" stroke="#5a5a5a" stroke-width="1.3"/></svg>
<svg class="a" style="left:1384px;top:977px;opacity:0.3;" width="20" height="20" viewBox="0 0 20 20"><rect x="1.5" y="1.5" width="14" height="15" fill="none" stroke="#555" stroke-width="1"/><rect x="0" y="0" width="3" height="3" fill="#1d8fe0"/><rect x="14" y="0" width="3" height="3" fill="#1d8fe0"/><rect x="0" y="15" width="3" height="3" fill="#1d8fe0"/><path d="M10 19L18 11L19.5 12.5L11.5 20.5z" fill="#f5c240"/><rect x="16" y="10" width="4" height="3" fill="#e84040" transform="rotate(45 18 11.5)"/></svg>
<svg class="a" style="left:1414px;top:977px;opacity:0.3;" width="20" height="20" viewBox="0 0 20 20"><path d="M0.6 4.3L4.3 0.6H19.4V15.2L15.2 19.4H0.6z" fill="#d9d9d9" stroke="#555" stroke-width="1.1" stroke-linejoin="round"/><rect x="17.6" y="0.6" width="1.9" height="15" fill="#5a5a5a"/><path d="M8.5 7.5L11 5a2.6 2.6 0 0 1 3.7 3.7L12 11.4M11 12L8.5 14.5a2.6 2.6 0 0 1-3.7-3.7L7.5 8.1" fill="none" stroke="#888" stroke-width="1.1"/><path d="M8 11.5L11.5 8" stroke="#666" stroke-width="1.2"/></svg>
<div class="a" style="left:194px;top:1007px;width:1249px;height:2px;background:#cfcfcf;"></div>
<div class="a" style="left:193px;top:1001px;width:2px;height:7px;background:#cfcfcf;"></div>
<div class="a" style="left:223px;top:1001px;width:2px;height:7px;background:#cfcfcf;"></div>
<div class="a" style="left:253px;top:1001px;width:2px;height:7px;background:#cfcfcf;"></div>
<div class="a" style="left:283px;top:1001px;width:2px;height:7px;background:#cfcfcf;"></div>
<div class="a" style="left:313px;top:1001px;width:2px;height:7px;background:#cfcfcf;"></div>
<div class="a" style="left:343px;top:1001px;width:2px;height:7px;background:#cfcfcf;"></div>
<div class="a" style="left:373px;top:1001px;width:2px;height:7px;background:#cfcfcf;"></div>
<div class="a" style="left:403px;top:1001px;width:2px;height:7px;background:#cfcfcf;"></div>
<div class="a" style="left:433px;top:1001px;width:2px;height:7px;background:#cfcfcf;"></div>
<div class="a" style="left:463px;top:1001px;width:2px;height:7px;background:#cfcfcf;"></div>
<div class="a" style="left:493px;top:1001px;width:2px;height:7px;background:#cfcfcf;"></div>
<div class="a" style="left:523px;top:1001px;width:2px;height:7px;background:#cfcfcf;"></div>
<div class="a" style="left:553px;top:1001px;width:2px;height:7px;background:#cfcfcf;"></div>
<div class="a" style="left:583px;top:1001px;width:2px;height:7px;background:#cfcfcf;"></div>
<div class="a" style="left:613px;top:1001px;width:2px;height:7px;background:#cfcfcf;"></div>
<div class="a" style="left:643px;top:1001px;width:2px;height:7px;background:#cfcfcf;"></div>
<div class="a" style="left:673px;top:1001px;width:2px;height:7px;background:#cfcfcf;"></div>
<div class="a" style="left:703px;top:1001px;width:2px;height:7px;background:#cfcfcf;"></div>
<div class="a" style="left:733px;top:1001px;width:2px;height:7px;background:#cfcfcf;"></div>
<div class="a" style="left:763px;top:1001px;width:2px;height:7px;background:#cfcfcf;"></div>
<div class="a" style="left:793px;top:1001px;width:2px;height:7px;background:#cfcfcf;"></div>
<div class="a" style="left:823px;top:1001px;width:2px;height:7px;background:#cfcfcf;"></div>
<div class="a" style="left:853px;top:1001px;width:2px;height:7px;background:#cfcfcf;"></div>
<div class="a" style="left:883px;top:1001px;width:2px;height:7px;background:#cfcfcf;"></div>
<div class="a" style="left:913px;top:1001px;width:2px;height:7px;background:#cfcfcf;"></div>
<div class="a" style="left:943px;top:1001px;width:2px;height:7px;background:#cfcfcf;"></div>
<div class="a" style="left:973px;top:1001px;width:2px;height:7px;background:#cfcfcf;"></div>
<div class="a" style="left:1003px;top:1001px;width:2px;height:7px;background:#cfcfcf;"></div>
<div class="a" style="left:1033px;top:1001px;width:2px;height:7px;background:#cfcfcf;"></div>
<div class="a" style="left:1063px;top:1001px;width:2px;height:7px;background:#cfcfcf;"></div>
<div class="a" style="left:1093px;top:1001px;width:2px;height:7px;background:#cfcfcf;"></div>
<div class="a" style="left:1123px;top:1001px;width:2px;height:7px;background:#cfcfcf;"></div>
<div class="a" style="left:1153px;top:1001px;width:2px;height:7px;background:#cfcfcf;"></div>
<div class="a" style="left:1183px;top:1001px;width:2px;height:7px;background:#cfcfcf;"></div>
<div class="a" style="left:1213px;top:1001px;width:2px;height:7px;background:#cfcfcf;"></div>
<div class="a" style="left:1243px;top:1001px;width:2px;height:7px;background:#cfcfcf;"></div>
<div class="a" style="left:1273px;top:1001px;width:2px;height:7px;background:#cfcfcf;"></div>
<div class="a" style="left:1303px;top:1001px;width:2px;height:7px;background:#cfcfcf;"></div>
<div class="a" style="left:1333px;top:1001px;width:2px;height:7px;background:#cfcfcf;"></div>
<div class="a" style="left:1363px;top:1001px;width:2px;height:7px;background:#cfcfcf;"></div>
<div class="a" style="left:1393px;top:1001px;width:2px;height:7px;background:#cfcfcf;"></div>
<div class="a" style="left:1423px;top:1001px;width:2px;height:7px;background:#cfcfcf;"></div>
<div class="a" style="left:1447px;top:1007px;width:4px;height:2px;background:#cfcfcf;"></div>
<svg class="a" style="left:741px;top:969px;" width="16" height="40" viewBox="0 0 16 40"><path d="M0 0H15V5L9.5 8V39H6V8L0 5z" fill="#555"/></svg>
<svg class="a" style="left:1465px;top:983px;" width="20" height="20" viewBox="0 0 20 20"><g transform="translate(10 10)"><rect x="-2" y="-10" width="4" height="5" fill="#8a8a8a" transform="rotate(0)"/><rect x="-2" y="-10" width="4" height="5" fill="#8a8a8a" transform="rotate(45)"/><rect x="-2" y="-10" width="4" height="5" fill="#8a8a8a" transform="rotate(90)"/><rect x="-2" y="-10" width="4" height="5" fill="#8a8a8a" transform="rotate(135)"/><rect x="-2" y="-10" width="4" height="5" fill="#8a8a8a" transform="rotate(180)"/><rect x="-2" y="-10" width="4" height="5" fill="#8a8a8a" transform="rotate(225)"/><rect x="-2" y="-10" width="4" height="5" fill="#8a8a8a" transform="rotate(270)"/><rect x="-2" y="-10" width="4" height="5" fill="#8a8a8a" transform="rotate(315)"/><circle r="7" fill="#8a8a8a"/><circle r="3" fill="#f1f1f1"/></g></svg>
<svg class="a" style="left:0px;top:0px;pointer-events:none;" width="1501" height="1020" viewBox="0 0 1501 1020"><path d="M200.8 98 C198.3 97.2 191.5 93.4 185.9 92.9 C180.3 92.4 172.4 93.6 167 95.2 C161.6 96.8 157.3 99.4 153.3 102.7 C149.3 106.0 145.2 110.3 143 114.8 C140.8 119.3 140.0 124.6 139.8 129.7 C139.6 134.8 140.1 140.8 142 145.5 C143.9 150.2 147.2 154.0 151.4 157.6 C155.6 161.2 161.4 164.9 167.2 167 C173.0 169.1 180.1 170.0 186 170.2 C191.9 170.3 198.4 169.5 202.6 167.9 C206.8 166.3 208.8 163.4 211 160.4 C213.2 157.4 214.3 154.8 215.7 150 C217.1 145.2 218.5 137.2 219.4 131.6 C220.3 126.0 221.2 120.8 221.2 116.7 C221.2 112.7 220.6 109.5 219.4 107.3 C218.2 105.0 216.1 104.5 213.8 103.2 C211.5 101.9 206.8 100.0 205.4 99.4" fill="none" stroke="#e31b1b" stroke-width="4.3" stroke-linecap="round" stroke-linejoin="round"/><path d="M279.1 228 C277.3 226.6 272.1 222.0 268.2 219.7 C264.3 217.3 259.2 214.7 255.5 213.9 C251.8 213.2 248.2 213.7 245.9 215.2 C243.6 216.7 242.4 219.7 241.5 222.8 C240.6 225.9 240.4 229.9 240.5 233.7 C240.6 237.5 240.7 242.5 242.1 245.8 C243.5 249.1 246.0 251.3 249.1 253.4 C252.2 255.5 256.9 257.6 260.6 258.5 C264.3 259.4 268.1 259.4 271.4 258.5 C274.7 257.6 278.3 256.4 280.4 253.4 C282.5 250.4 283.5 244.5 284.2 240.7 C284.9 236.9 285.0 233.2 284.8 230.5 C284.6 227.8 283.2 225.8 282.9 224.8" fill="none" stroke="#e31b1b" stroke-width="4.5" stroke-linecap="round" stroke-linejoin="round"/><path d="M1190.9 494 C1190.3 492.9 1189.1 489.1 1187.3 487.3 C1185.5 485.5 1183.5 484.5 1180 483.3 C1176.5 482.1 1171.6 480.6 1166.6 480 C1161.6 479.4 1155.5 479.8 1150 480 C1144.5 480.2 1138.8 480.2 1133.3 481.3 C1127.8 482.4 1120.5 484.9 1116.7 486.7 C1112.9 488.5 1111.6 489.8 1110.7 492 C1109.8 494.2 1109.8 497.4 1111.3 500 C1112.8 502.6 1116.3 505.1 1120 507.3 C1123.7 509.5 1128.3 511.7 1133.3 513.3 C1138.3 514.8 1144.5 515.9 1150 516.6 C1155.5 517.3 1161.8 517.4 1166.6 517.3 C1171.4 517.2 1175.7 517.2 1178.6 516 C1181.5 514.8 1182.9 512.7 1184 510 C1185.1 507.3 1185.1 503.3 1185.3 500 C1185.5 496.7 1185.5 492.2 1185.3 490 C1185.1 487.8 1184.2 487.2 1184 486.7" fill="none" stroke="#e31b1b" stroke-width="4.6" stroke-linecap="round" stroke-linejoin="round"/></svg>
</body></html>
